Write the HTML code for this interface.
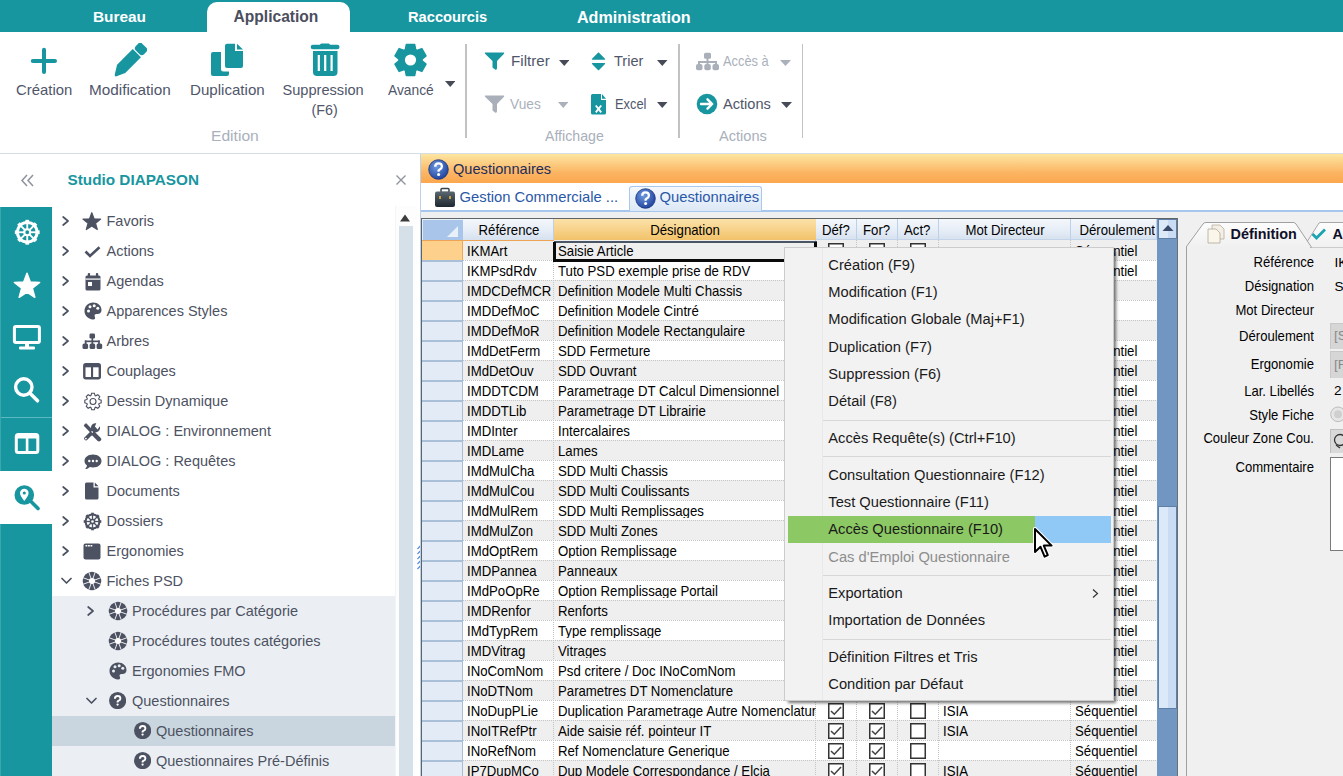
<!DOCTYPE html>
<html><head><meta charset="utf-8"><title>Questionnaires</title>
<style>
html,body{margin:0;padding:0;}
body{width:1343px;height:776px;overflow:hidden;position:relative;background:#fff;font-family:"Liberation Sans",sans-serif;}
.t{position:absolute;white-space:nowrap;}
.b{position:absolute;display:block;}
</style></head><body>
<div class="b" style="left:0px;top:0px;width:1343px;height:32px;background:#1896a0;"></div>
<div class="b" style="left:207px;top:2px;width:143px;height:31px;background:#fff;border-radius:10px 10px 0 0;"></div>
<div class="t" style="left:93px;top:9.46px;font-size:15.4px;line-height:15.4px;color:#fff;font-weight:bold;">Bureau</div>
<div class="t" style="left:233.5px;top:9.29px;font-size:15.6px;line-height:15.6px;color:#4c4e5e;font-weight:bold;">Application</div>
<div class="t" style="left:408px;top:10.05px;font-size:14.7px;line-height:14.7px;color:#fff;font-weight:bold;">Raccourcis</div>
<div class="t" style="left:577px;top:8.87px;font-size:16.1px;line-height:16.1px;color:#fff;font-weight:bold;">Administration</div>
<svg class="b" style="left:29px;top:46px;" width="30" height="30" viewBox="0 0 30 30"><rect x="1.8" y="13" width="26.2" height="4" rx="2" fill="#1896a0"/><rect x="13" y="1.7" width="4" height="26.2" rx="2" fill="#1896a0"/></svg>
<svg class="b" style="left:112.5px;top:43px;" width="34" height="34" viewBox="0 0 34 34"><g transform="translate(17,17) rotate(-45)" fill="#1896a0"><path d="M-12.5,-5.8 L9.7,-5.8 L9.7,5.8 L-12.5,5.8 L-21,2 Q-22.8,1 -21.3,-0.3 Z"/><rect x="10.9" y="-5.8" width="9.3" height="11.6" rx="3.2"/></g></svg>
<svg class="b" style="left:210px;top:43px;" width="34" height="34" viewBox="0 0 34 34"><path d="M1,11 Q1,9 3,9 L11,9 L11,26 Q11,28.5 13.5,28.5 L19,28.5 L19,31 Q19,33 17,33 L3,33 Q1,33 1,31Z" fill="#1896a0"/><path d="M15,2.7 Q15,0.7 17,0.7 L25,0.7 L25,8 L33,8 L33,23 Q33,25 31,25 L17,25 Q15,25 15,23Z" fill="#1896a0"/><path d="M27,0.7 L33,6.5 L27,6.5Z" fill="#1896a0"/></svg>
<svg class="b" style="left:310px;top:43px;" width="31" height="34" viewBox="0 0 31 34"><rect x="0.7" y="1.7" width="28.8" height="4.6" rx="2.3" fill="#1896a0"/><rect x="10" y="0.6" width="10" height="3" rx="1.5" fill="#1896a0"/><path d="M3,8 L27.5,8 L27.5,29 Q27.5,33 23.5,33 L7,33 Q3,33 3,29Z" fill="#1896a0"/><rect x="7.7" y="12" width="2.2" height="16" fill="#fff"/><rect x="14.1" y="12" width="2.2" height="16" fill="#fff"/><rect x="20.5" y="12" width="2.2" height="16" fill="#fff"/></svg>
<svg class="b" style="left:394px;top:43px;" width="34" height="34" viewBox="0 0 34 34"><path d="M11.41,6.69 L12.36,1.55 L20.64,1.55 L21.59,6.69 L22.89,7.44 L27.81,5.69 L31.95,12.86 L27.98,16.25 L27.98,17.75 L31.95,21.14 L27.81,28.31 L22.89,26.56 L21.59,27.31 L20.64,32.45 L12.36,32.45 L11.41,27.31 L10.11,26.56 L5.19,28.31 L1.05,21.14 L5.02,17.75 L5.02,16.25 L1.05,12.86 L5.19,5.69 L10.11,7.44Z" fill="#1896a0" stroke="#1896a0" stroke-width="1.6" stroke-linejoin="round"/><circle cx="16.5" cy="17" r="11.8" fill="#1896a0"/><circle cx="16.5" cy="17" r="5.6" fill="#fff"/></svg>
<svg class="b" style="left:444.5px;top:80.5px;" width="10.5" height="6" viewBox="0 0 10.5 6"><path d="M0,0 L10.5,0 L5.25,6Z" fill="#474b58"/></svg>
<div class="t" style="left:15.5px;top:83.14px;font-size:14.6px;line-height:14.6px;color:#50566a;transform:scaleX(1.02);transform-origin:0 0;">Création</div>
<div class="t" style="left:89px;top:83.14px;font-size:14.6px;line-height:14.6px;color:#50566a;transform:scaleX(1.05);transform-origin:0 0;">Modification</div>
<div class="t" style="left:189.5px;top:83.14px;font-size:14.6px;line-height:14.6px;color:#50566a;transform:scaleX(1.035);transform-origin:0 0;">Duplication</div>
<div class="t" style="left:282.5px;top:83.14px;font-size:14.6px;line-height:14.6px;color:#50566a;">Suppression</div>
<div class="t" style="left:311.5px;top:103.39px;font-size:14.3px;line-height:14.3px;color:#50566a;">(F6)</div>
<div class="t" style="left:387.5px;top:83.14px;font-size:14.6px;line-height:14.6px;color:#50566a;transform:scaleX(0.945);transform-origin:0 0;">Avancé</div>
<div class="t" style="left:211px;top:128.64px;font-size:14.6px;line-height:14.6px;color:#a9b0bb;transform:scaleX(1.07);transform-origin:0 0;">Edition</div>
<div class="b" style="left:465px;top:44px;width:1.5px;height:94px;background:#c2c2c2;"></div>
<div class="b" style="left:678px;top:44px;width:1.5px;height:94px;background:#c2c2c2;"></div>
<div class="b" style="left:801.5px;top:44px;width:1.5px;height:94px;background:#c2c2c2;"></div>
<svg class="b" style="left:484px;top:52px;" width="22" height="19" viewBox="0 0 22 19"><path d="M1.5,0.5 L19.5,0.5 Q20.8,0.5 20,1.8 L13,9 L13,16 Q13,18.5 11,17.5 L8.5,15.5 L8.5,9 L1,1.8 Q0.3,0.5 1.5,0.5Z" fill="#1896a0"/></svg>
<div class="t" style="left:510.5px;top:54.44px;font-size:14.6px;line-height:14.6px;color:#50566a;transform:scaleX(1.04);transform-origin:0 0;">Filtrer</div>
<svg class="b" style="left:558.5px;top:59.5px;" width="10.5" height="6" viewBox="0 0 10.5 6"><path d="M0,0 L10.5,0 L5.25,6Z" fill="#474b58"/></svg>
<svg class="b" style="left:591px;top:52px;" width="15" height="19" viewBox="0 0 15 19"><path d="M7.5,0.3 L14,6.8 Q14.6,7.8 13.4,7.8 L1.6,7.8 Q0.4,7.8 1,6.8Z M7.5,18.5 L14,12 Q14.6,11 13.4,11 L1.6,11 Q0.4,11 1,12Z" fill="#1896a0"/></svg>
<div class="t" style="left:614px;top:54.44px;font-size:14.6px;line-height:14.6px;color:#50566a;">Trier</div>
<svg class="b" style="left:657px;top:59.5px;" width="10.5" height="6" viewBox="0 0 10.5 6"><path d="M0,0 L10.5,0 L5.25,6Z" fill="#474b58"/></svg>
<svg class="b" style="left:484px;top:95px;" width="22" height="19" viewBox="0 0 22 19"><path d="M1.5,0.5 L19.5,0.5 Q20.8,0.5 20,1.8 L13,9 L13,16 Q13,18.5 11,17.5 L8.5,15.5 L8.5,9 L1,1.8 Q0.3,0.5 1.5,0.5Z" fill="#a9b0b9"/></svg>
<div class="t" style="left:510px;top:96.64px;font-size:14.6px;line-height:14.6px;color:#aab1bb;transform:scaleX(0.94);transform-origin:0 0;">Vues</div>
<svg class="b" style="left:557.5px;top:101.5px;" width="10.5" height="6" viewBox="0 0 10.5 6"><path d="M0,0 L10.5,0 L5.25,6Z" fill="#aab1bb"/></svg>
<svg class="b" style="left:591px;top:94px;" width="16" height="21" viewBox="0 0 16 21"><path d="M1.5,0 L10,0 L10,6 L15,6 L15,19 Q15,20.5 13.5,20.5 L1.5,20.5 Q0,20.5 0,19 L0,1.5 Q0,0 1.5,0Z M11,0 L15,4.8 L11,4.8Z" fill="#1896a0"/><path d="M4.8,11.5 L10.2,18.3 M10.2,11.5 L4.8,18.3" stroke="#fff" stroke-width="1.9"/></svg>
<div class="t" style="left:614.5px;top:96.64px;font-size:14.6px;line-height:14.6px;color:#50566a;transform:scaleX(0.88);transform-origin:0 0;">Excel</div>
<svg class="b" style="left:657px;top:101.5px;" width="10.5" height="6" viewBox="0 0 10.5 6"><path d="M0,0 L10.5,0 L5.25,6Z" fill="#474b58"/></svg>
<div class="t" style="left:544.5px;top:128.64px;font-size:14.6px;line-height:14.6px;color:#a9b0bb;transform:scaleX(0.97);transform-origin:0 0;">Affichage</div>
<svg class="b" style="left:695px;top:52px;" width="25" height="19" viewBox="0 0 25 19"><rect x="9" y="0.8" width="7" height="6" rx="1.5" fill="#a9b0b9"/><rect x="11.5" y="6" width="2" height="4" fill="#a9b0b9"/><rect x="3" y="9" width="19" height="2" fill="#a9b0b9"/><rect x="3" y="9" width="2" height="4" fill="#a9b0b9"/><rect x="20" y="9" width="2" height="4" fill="#a9b0b9"/><rect x="11.5" y="9" width="2" height="4" fill="#a9b0b9"/><rect x="1" y="12" width="6.5" height="6.3" rx="2" fill="#a9b0b9"/><rect x="9.3" y="12" width="6.5" height="6.3" rx="2" fill="#a9b0b9"/><rect x="17.5" y="12" width="6.5" height="6.3" rx="2" fill="#a9b0b9"/></svg>
<div class="t" style="left:723px;top:54.44px;font-size:14.6px;line-height:14.6px;color:#aab1bb;transform:scaleX(0.88);transform-origin:0 0;">Accès à</div>
<svg class="b" style="left:780px;top:59.5px;" width="11" height="6" viewBox="0 0 11 6"><path d="M0,0 L11,0 L5.5,6Z" fill="#aab1bb"/></svg>
<svg class="b" style="left:696px;top:93px;" width="22" height="22" viewBox="0 0 22 22"><circle cx="11" cy="11" r="10.3" fill="#1896a0"/><path d="M5,11 L16,11 M11.5,6.3 L16.2,11 L11.5,15.7" stroke="#fff" stroke-width="2.4" fill="none" stroke-linecap="round" stroke-linejoin="round"/></svg>
<div class="t" style="left:723px;top:96.64px;font-size:14.6px;line-height:14.6px;color:#50566a;">Actions</div>
<svg class="b" style="left:780.5px;top:101.5px;" width="11" height="6" viewBox="0 0 11 6"><path d="M0,0 L11,0 L5.5,6Z" fill="#474b58"/></svg>
<div class="t" style="left:719px;top:128.64px;font-size:14.6px;line-height:14.6px;color:#a9b0bb;">Actions</div>
<div class="b" style="left:0px;top:153px;width:1343px;height:1px;background:#d5dee5;"></div>
<svg class="b" style="left:20px;top:174px;" width="15" height="13" viewBox="0 0 15 13"><path d="M7,1 L2,6.5 L7,12 M13,1 L8,6.5 L13,12" stroke="#8d929c" stroke-width="1.5" fill="none"/></svg>
<div class="t" style="left:67.5px;top:172.35px;font-size:15.3px;line-height:15.3px;color:#1896a0;font-weight:bold;">Studio DIAPASON</div>
<svg class="b" style="left:395px;top:174px;" width="12" height="12" viewBox="0 0 12 12"><path d="M1.5,1.5 L10.5,10.5 M10.5,1.5 L1.5,10.5" stroke="#8f949c" stroke-width="1.4"/></svg>
<div class="b" style="left:0px;top:207px;width:52px;height:264px;background:#1896a0;"></div>
<div class="b" style="left:0px;top:417px;width:52px;height:1px;background:#5cb8c0;"></div>
<div class="b" style="left:0px;top:524px;width:52px;height:252px;background:#1896a0;"></div>
<div class="b" style="left:0px;top:207px;width:1px;height:264px;background:#3aa6ae;"></div>
<div class="b" style="left:0px;top:524px;width:1px;height:252px;background:#3aa6ae;"></div>
<svg class="b" style="left:14px;top:219px;" width="27" height="27" viewBox="0 0 27 27"><circle cx="13.25" cy="13.25" r="9.80" fill="none" stroke="#fff" stroke-width="2.98"/><circle cx="13.25" cy="13.25" r="2.98" fill="none" stroke="#fff" stroke-width="2.11"/><line x1="16.35" y1="13.25" x2="23.17" y2="13.25" stroke="#fff" stroke-width="1.86"/><line x1="23.17" y1="13.25" x2="25.65" y2="13.25" stroke="#fff" stroke-width="3.72"/><line x1="15.44" y1="15.44" x2="20.26" y2="20.26" stroke="#fff" stroke-width="1.86"/><line x1="20.26" y1="20.26" x2="22.02" y2="22.02" stroke="#fff" stroke-width="3.72"/><line x1="13.25" y1="16.35" x2="13.25" y2="23.17" stroke="#fff" stroke-width="1.86"/><line x1="13.25" y1="23.17" x2="13.25" y2="25.65" stroke="#fff" stroke-width="3.72"/><line x1="11.06" y1="15.44" x2="6.24" y2="20.26" stroke="#fff" stroke-width="1.86"/><line x1="6.24" y1="20.26" x2="4.48" y2="22.02" stroke="#fff" stroke-width="3.72"/><line x1="10.15" y1="13.25" x2="3.33" y2="13.25" stroke="#fff" stroke-width="1.86"/><line x1="3.33" y1="13.25" x2="0.85" y2="13.25" stroke="#fff" stroke-width="3.72"/><line x1="11.06" y1="11.06" x2="6.24" y2="6.24" stroke="#fff" stroke-width="1.86"/><line x1="6.24" y1="6.24" x2="4.48" y2="4.48" stroke="#fff" stroke-width="3.72"/><line x1="13.25" y1="10.15" x2="13.25" y2="3.33" stroke="#fff" stroke-width="1.86"/><line x1="13.25" y1="3.33" x2="13.25" y2="0.85" stroke="#fff" stroke-width="3.72"/><line x1="15.44" y1="11.06" x2="20.26" y2="6.24" stroke="#fff" stroke-width="1.86"/><line x1="20.26" y1="6.24" x2="22.02" y2="4.48" stroke="#fff" stroke-width="3.72"/></svg>
<svg class="b" style="left:13px;top:271px;" width="28" height="28" viewBox="0 0 28 28"><polygon points="14.00,2.20 17.29,10.97 26.65,11.39 19.33,17.23 21.82,26.26 14.00,21.10 6.18,26.26 8.67,17.23 1.35,11.39 10.71,10.97" fill="#fff" stroke="#fff" stroke-width="1.5" stroke-linejoin="round"/></svg>
<svg class="b" style="left:12px;top:324px;" width="30" height="27" viewBox="0 0 30 27"><rect x="2.4" y="2.4" width="25" height="16" rx="1.5" fill="none" stroke="#fff" stroke-width="3"/><rect x="13" y="19" width="4" height="5" fill="#fff"/><rect x="7" y="22.5" width="16" height="3" rx="1" fill="#fff"/></svg>
<svg class="b" style="left:13px;top:376px;" width="28" height="28" viewBox="0 0 28 28"><circle cx="10.8" cy="11" r="8.2" fill="none" stroke="#fff" stroke-width="3.4"/><path d="M17,17.3 L24.5,24.8" stroke="#fff" stroke-width="3.6" stroke-linecap="round"/></svg>
<svg class="b" style="left:14px;top:432px;" width="27" height="24" viewBox="0 0 27 24"><rect x="2.3" y="2.5" width="21.5" height="18" rx="2" fill="none" stroke="#fff" stroke-width="3"/><rect x="2.3" y="2.5" width="21.5" height="4" fill="#fff"/><rect x="11.8" y="2.5" width="2.6" height="18" fill="#fff"/></svg>
<svg class="b" style="left:13px;top:484px;" width="28" height="27" viewBox="0 0 28 27"><circle cx="11.3" cy="11" r="9.8" fill="#1896a0"/><path d="M11.3,17 C9,13.5 7,11.5 7,9 C7,6.5 9,4.8 11.3,4.8 C13.6,4.8 15.6,6.5 15.6,9 C15.6,11.5 13.6,13.5 11.3,17Z" fill="#fff"/><circle cx="11.3" cy="9" r="1.6" fill="#1896a0"/><path d="M18.5,18 L25,24.5" stroke="#1896a0" stroke-width="3.6" stroke-linecap="round"/></svg>
<div class="b" style="left:52px;top:596px;width:343px;height:180px;background:#ebeff3;"></div>
<div class="b" style="left:52px;top:716px;width:343px;height:30px;background:#c9d6df;"></div>
<svg class="b" style="left:61.5px;top:216px;" width="8" height="10" viewBox="0 0 8 10"><path d="M1.2,1 L6,5 L1.2,9" stroke="#4d5262" stroke-width="1.7" fill="none" stroke-linecap="round" stroke-linejoin="round"/></svg>
<svg class="b" style="left:82.0px;top:212px;" width="20" height="19" viewBox="0 0 20 19"><polygon points="9.80,0.70 12.09,6.84 18.64,7.13 13.51,11.21 15.27,17.52 9.80,13.90 4.33,17.52 6.09,11.21 0.96,7.13 7.51,6.84" fill="#4d5262" stroke="#4d5262" stroke-width="1.2" stroke-linejoin="round"/></svg>
<div class="t" style="left:106.5px;top:214.02px;font-size:14.5px;line-height:14.5px;color:#4d5262;">Favoris</div>
<svg class="b" style="left:61.5px;top:246px;" width="8" height="10" viewBox="0 0 8 10"><path d="M1.2,1 L6,5 L1.2,9" stroke="#4d5262" stroke-width="1.7" fill="none" stroke-linecap="round" stroke-linejoin="round"/></svg>
<svg class="b" style="left:84.0px;top:246px;" width="17" height="12" viewBox="0 0 17 12"><path d="M1.5,5.5 L6,10 L15.5,1.2" stroke="#4d5262" stroke-width="2.6" fill="none"/></svg>
<div class="t" style="left:106.5px;top:244.02px;font-size:14.5px;line-height:14.5px;color:#4d5262;">Actions</div>
<svg class="b" style="left:61.5px;top:276px;" width="8" height="10" viewBox="0 0 8 10"><path d="M1.2,1 L6,5 L1.2,9" stroke="#4d5262" stroke-width="1.7" fill="none" stroke-linecap="round" stroke-linejoin="round"/></svg>
<svg class="b" style="left:84.5px;top:272.5px;" width="16" height="18" viewBox="0 0 16 18"><rect x="0.5" y="2.5" width="15" height="15" rx="1.6" fill="#4d5262"/><rect x="2.8" y="0" width="2.3" height="4" rx="0.8" fill="#4d5262"/><rect x="10.9" y="0" width="2.3" height="4" rx="0.8" fill="#4d5262"/><rect x="0.5" y="5.5" width="15" height="1.2" fill="#fff"/><rect x="3" y="9" width="4" height="4" fill="#fff"/></svg>
<div class="t" style="left:106.5px;top:274.02px;font-size:14.5px;line-height:14.5px;color:#4d5262;">Agendas</div>
<svg class="b" style="left:61.5px;top:306px;" width="8" height="10" viewBox="0 0 8 10"><path d="M1.2,1 L6,5 L1.2,9" stroke="#4d5262" stroke-width="1.7" fill="none" stroke-linecap="round" stroke-linejoin="round"/></svg>
<svg class="b" style="left:83.5px;top:302px;" width="18" height="18" viewBox="0 0 18 18"><path d="M9,0.5 C14,0.5 17.5,3.8 17.5,8 C17.5,11 15.5,12.2 13,12 C11,11.8 10,13 10.8,14.8 C11.8,17 10.5,17.8 8.8,17.5 C4,17 0.5,13.5 0.5,9 C0.5,4.2 4.2,0.5 9,0.5Z" fill="#4d5262"/><circle cx="4.5" cy="9" r="1.5" fill="#fff"/><circle cx="6" cy="4.8" r="1.5" fill="#fff"/><circle cx="10.2" cy="3.8" r="1.5" fill="#fff"/><circle cx="13.8" cy="6.2" r="1.5" fill="#fff"/></svg>
<div class="t" style="left:106.5px;top:304.02px;font-size:14.5px;line-height:14.5px;color:#4d5262;">Apparences Styles</div>
<svg class="b" style="left:61.5px;top:336px;" width="8" height="10" viewBox="0 0 8 10"><path d="M1.2,1 L6,5 L1.2,9" stroke="#4d5262" stroke-width="1.7" fill="none" stroke-linecap="round" stroke-linejoin="round"/></svg>
<svg class="b" style="left:81.5px;top:333px;" width="21" height="17" viewBox="0 0 21 17"><rect x="7.5" y="0.5" width="5.5" height="5" rx="1.2" fill="#4d5262"/><rect x="9.5" y="5" width="1.7" height="3.5" fill="#4d5262"/><rect x="2.8" y="7.5" width="15" height="1.7" fill="#4d5262"/><rect x="2.8" y="7.5" width="1.7" height="3.5" fill="#4d5262"/><rect x="16.1" y="7.5" width="1.7" height="3.5" fill="#4d5262"/><rect x="9.5" y="7.5" width="1.7" height="3.5" fill="#4d5262"/><rect x="0.5" y="10.5" width="5.6" height="5.5" rx="1.6" fill="#4d5262"/><rect x="7.6" y="10.5" width="5.6" height="5.5" rx="1.6" fill="#4d5262"/><rect x="14.6" y="10.5" width="5.6" height="5.5" rx="1.6" fill="#4d5262"/></svg>
<div class="t" style="left:106.5px;top:334.02px;font-size:14.5px;line-height:14.5px;color:#4d5262;">Arbres</div>
<svg class="b" style="left:61.5px;top:366px;" width="8" height="10" viewBox="0 0 8 10"><path d="M1.2,1 L6,5 L1.2,9" stroke="#4d5262" stroke-width="1.7" fill="none" stroke-linecap="round" stroke-linejoin="round"/></svg>
<svg class="b" style="left:83.0px;top:363px;" width="18" height="17" viewBox="0 0 18 17"><rect x="1.3" y="1.3" width="15.5" height="14" rx="1.5" fill="none" stroke="#4d5262" stroke-width="2.4"/><rect x="1.3" y="1.3" width="15.5" height="3" fill="#4d5262"/><rect x="8" y="1.3" width="2.1" height="14" fill="#4d5262"/></svg>
<div class="t" style="left:106.5px;top:364.02px;font-size:14.5px;line-height:14.5px;color:#4d5262;">Couplages</div>
<svg class="b" style="left:61.5px;top:396px;" width="8" height="10" viewBox="0 0 8 10"><path d="M1.2,1 L6,5 L1.2,9" stroke="#4d5262" stroke-width="1.7" fill="none" stroke-linecap="round" stroke-linejoin="round"/></svg>
<svg class="b" style="left:83.5px;top:391.5px;" width="18" height="19" viewBox="0 0 18 19"><path d="M14.95,7.42 L17.19,8.14 L17.19,10.86 L14.95,11.58 L14.67,12.24 L15.75,14.33 L13.83,16.25 L11.74,15.17 L11.08,15.45 L10.36,17.69 L7.64,17.69 L6.92,15.45 L6.26,15.17 L4.17,16.25 L2.25,14.33 L3.33,12.24 L3.05,11.58 L0.81,10.86 L0.81,8.14 L3.05,7.42 L3.33,6.76 L2.25,4.67 L4.17,2.75 L6.26,3.83 L6.92,3.55 L7.64,1.31 L10.36,1.31 L11.08,3.55 L11.74,3.83 L13.83,2.75 L15.75,4.67 L14.67,6.76Z" fill="none" stroke="#4d5262" stroke-width="1.1"/><circle cx="9" cy="9.5" r="3" fill="none" stroke="#4d5262" stroke-width="1.1"/></svg>
<div class="t" style="left:106.5px;top:394.02px;font-size:14.5px;line-height:14.5px;color:#4d5262;">Dessin Dynamique</div>
<svg class="b" style="left:61.5px;top:426px;" width="8" height="10" viewBox="0 0 8 10"><path d="M1.2,1 L6,5 L1.2,9" stroke="#4d5262" stroke-width="1.7" fill="none" stroke-linecap="round" stroke-linejoin="round"/></svg>
<svg class="b" style="left:82.0px;top:421.5px;" width="21" height="20" viewBox="0 0 21 20"><path d="M4,2 L2.5,3.5 L8.5,9.8 L10,8.3Z" fill="#4d5262" stroke="#4d5262" stroke-width="1.4" stroke-linejoin="round"/><path d="M11.3,11.5 L17,17.2" stroke="#4d5262" stroke-width="4.4" stroke-linecap="round"/><path d="M4,16.5 L10.5,10" stroke="#4d5262" stroke-width="3.8" stroke-linecap="round"/><circle cx="3.9" cy="16.6" r="0.9" fill="#fff"/><path d="M10,10.5 L13,7.5" stroke="#fff" stroke-width="1.2"/><path d="M17.8,4.2 A4.6,4.6 0 1 1 14.3,1.3 L12.9,4.6 L15.6,7.4 Z" fill="#4d5262"/><path d="M8.5,12.5 L13,8" stroke="#4d5262" stroke-width="3" stroke-linecap="round"/><path d="M9.6,9.3 L10.8,10.5" stroke="#fff" stroke-width="1.1"/></svg>
<div class="t" style="left:106.5px;top:424.02px;font-size:14.5px;line-height:14.5px;color:#4d5262;">DIALOG : Environnement</div>
<svg class="b" style="left:61.5px;top:456px;" width="8" height="10" viewBox="0 0 8 10"><path d="M1.2,1 L6,5 L1.2,9" stroke="#4d5262" stroke-width="1.7" fill="none" stroke-linecap="round" stroke-linejoin="round"/></svg>
<svg class="b" style="left:83.5px;top:453.5px;" width="18" height="16" viewBox="0 0 18 16"><path d="M9,0.5 C14,0.5 17.5,3.4 17.5,7 C17.5,10.6 14,13.5 9,13.5 C7.8,13.5 6.8,13.3 5.8,13 C4.5,14.3 2.8,15.2 1,15 C2.2,13.8 2.8,12.8 3,11.5 C1.4,10.3 0.5,8.8 0.5,7 C0.5,3.4 4,0.5 9,0.5Z" fill="#4d5262"/><circle cx="5.3" cy="7" r="1.2" fill="#fff"/><circle cx="9" cy="7" r="1.2" fill="#fff"/><circle cx="12.7" cy="7" r="1.2" fill="#fff"/></svg>
<div class="t" style="left:106.5px;top:454.02px;font-size:14.5px;line-height:14.5px;color:#4d5262;">DIALOG : Requêtes</div>
<svg class="b" style="left:61.5px;top:486px;" width="8" height="10" viewBox="0 0 8 10"><path d="M1.2,1 L6,5 L1.2,9" stroke="#4d5262" stroke-width="1.7" fill="none" stroke-linecap="round" stroke-linejoin="round"/></svg>
<svg class="b" style="left:84.5px;top:482px;" width="15" height="18" viewBox="0 0 15 18"><path d="M1.5,0.5 L8.5,0.5 L8.5,5.5 L13.5,5.5 L13.5,16 Q13.5,17.5 12,17.5 L1.5,17.5 Q0,17.5 0,16 L0,2 Q0,0.5 1.5,0.5Z M9.8,0.5 L13.5,4.2 L9.8,4.2Z" fill="#4d5262"/></svg>
<div class="t" style="left:106.5px;top:484.02px;font-size:14.5px;line-height:14.5px;color:#4d5262;">Documents</div>
<svg class="b" style="left:61.5px;top:516px;" width="8" height="10" viewBox="0 0 8 10"><path d="M1.2,1 L6,5 L1.2,9" stroke="#4d5262" stroke-width="1.7" fill="none" stroke-linecap="round" stroke-linejoin="round"/></svg>
<svg class="b" style="left:83.0px;top:511.5px;" width="19" height="19" viewBox="0 0 19 19"><circle cx="9.5" cy="9.5" r="6.95" fill="none" stroke="#4d5262" stroke-width="2.11"/><circle cx="9.5" cy="9.5" r="2.11" fill="none" stroke="#4d5262" stroke-width="1.50"/><line x1="11.70" y1="9.50" x2="16.54" y2="9.50" stroke="#4d5262" stroke-width="1.32"/><line x1="16.54" y1="9.50" x2="18.30" y2="9.50" stroke="#4d5262" stroke-width="2.64"/><line x1="11.06" y1="11.06" x2="14.48" y2="14.48" stroke="#4d5262" stroke-width="1.32"/><line x1="14.48" y1="14.48" x2="15.72" y2="15.72" stroke="#4d5262" stroke-width="2.64"/><line x1="9.50" y1="11.70" x2="9.50" y2="16.54" stroke="#4d5262" stroke-width="1.32"/><line x1="9.50" y1="16.54" x2="9.50" y2="18.30" stroke="#4d5262" stroke-width="2.64"/><line x1="7.94" y1="11.06" x2="4.52" y2="14.48" stroke="#4d5262" stroke-width="1.32"/><line x1="4.52" y1="14.48" x2="3.28" y2="15.72" stroke="#4d5262" stroke-width="2.64"/><line x1="7.30" y1="9.50" x2="2.46" y2="9.50" stroke="#4d5262" stroke-width="1.32"/><line x1="2.46" y1="9.50" x2="0.70" y2="9.50" stroke="#4d5262" stroke-width="2.64"/><line x1="7.94" y1="7.94" x2="4.52" y2="4.52" stroke="#4d5262" stroke-width="1.32"/><line x1="4.52" y1="4.52" x2="3.28" y2="3.28" stroke="#4d5262" stroke-width="2.64"/><line x1="9.50" y1="7.30" x2="9.50" y2="2.46" stroke="#4d5262" stroke-width="1.32"/><line x1="9.50" y1="2.46" x2="9.50" y2="0.70" stroke="#4d5262" stroke-width="2.64"/><line x1="11.06" y1="7.94" x2="14.48" y2="4.52" stroke="#4d5262" stroke-width="1.32"/><line x1="14.48" y1="4.52" x2="15.72" y2="3.28" stroke="#4d5262" stroke-width="2.64"/></svg>
<div class="t" style="left:106.5px;top:514.02px;font-size:14.5px;line-height:14.5px;color:#4d5262;">Dossiers</div>
<svg class="b" style="left:61.5px;top:546px;" width="8" height="10" viewBox="0 0 8 10"><path d="M1.2,1 L6,5 L1.2,9" stroke="#4d5262" stroke-width="1.7" fill="none" stroke-linecap="round" stroke-linejoin="round"/></svg>
<svg class="b" style="left:83.0px;top:543px;" width="18" height="17" viewBox="0 0 18 17"><rect x="0.5" y="0.5" width="17" height="16" rx="2" fill="#4d5262"/><rect x="2.5" y="2" width="1.8" height="1.5" fill="#fff"/><rect x="5" y="2" width="1.8" height="1.5" fill="#fff"/><rect x="7.5" y="2" width="1.8" height="1.5" fill="#fff"/></svg>
<div class="t" style="left:106.5px;top:544.02px;font-size:14.5px;line-height:14.5px;color:#4d5262;">Ergonomies</div>
<svg class="b" style="left:60.5px;top:577px;" width="11" height="8" viewBox="0 0 11 8"><path d="M1,1.5 L5.5,6 L10,1.5" stroke="#4d5262" stroke-width="1.7" fill="none" stroke-linecap="round" stroke-linejoin="round"/></svg>
<svg class="b" style="left:82.0px;top:571px;" width="20" height="20" viewBox="0 0 20 20"><circle cx="10" cy="10" r="9.3" fill="#4d5262"/><line x1="10" y1="10" x2="19.18" y2="13.34" stroke="#fff" stroke-width="0.9"/><line x1="10" y1="10" x2="13.34" y2="19.18" stroke="#fff" stroke-width="0.9"/><line x1="10" y1="10" x2="6.66" y2="19.18" stroke="#fff" stroke-width="0.9"/><line x1="10" y1="10" x2="0.82" y2="13.34" stroke="#fff" stroke-width="0.9"/><line x1="10" y1="10" x2="0.82" y2="6.66" stroke="#fff" stroke-width="0.9"/><line x1="10" y1="10" x2="6.66" y2="0.82" stroke="#fff" stroke-width="0.9"/><line x1="10" y1="10" x2="13.34" y2="0.82" stroke="#fff" stroke-width="0.9"/><line x1="10" y1="10" x2="19.18" y2="6.66" stroke="#fff" stroke-width="0.9"/><circle cx="10" cy="10" r="3.07" fill="#fff"/></svg>
<div class="t" style="left:106.5px;top:574.02px;font-size:14.5px;line-height:14.5px;color:#4d5262;">Fiches PSD</div>
<svg class="b" style="left:87.0px;top:606px;" width="8" height="10" viewBox="0 0 8 10"><path d="M1.2,1 L6,5 L1.2,9" stroke="#4d5262" stroke-width="1.7" fill="none" stroke-linecap="round" stroke-linejoin="round"/></svg>
<svg class="b" style="left:107.5px;top:601px;" width="20" height="20" viewBox="0 0 20 20"><circle cx="10" cy="10" r="9.3" fill="#4d5262"/><line x1="10" y1="10" x2="19.18" y2="13.34" stroke="#fff" stroke-width="0.9"/><line x1="10" y1="10" x2="13.34" y2="19.18" stroke="#fff" stroke-width="0.9"/><line x1="10" y1="10" x2="6.66" y2="19.18" stroke="#fff" stroke-width="0.9"/><line x1="10" y1="10" x2="0.82" y2="13.34" stroke="#fff" stroke-width="0.9"/><line x1="10" y1="10" x2="0.82" y2="6.66" stroke="#fff" stroke-width="0.9"/><line x1="10" y1="10" x2="6.66" y2="0.82" stroke="#fff" stroke-width="0.9"/><line x1="10" y1="10" x2="13.34" y2="0.82" stroke="#fff" stroke-width="0.9"/><line x1="10" y1="10" x2="19.18" y2="6.66" stroke="#fff" stroke-width="0.9"/><circle cx="10" cy="10" r="3.07" fill="#fff"/></svg>
<div class="t" style="left:132.0px;top:604.02px;font-size:14.5px;line-height:14.5px;color:#4d5262;">Procédures par Catégorie</div>
<svg class="b" style="left:107.5px;top:631px;" width="20" height="20" viewBox="0 0 20 20"><circle cx="10" cy="10" r="9.3" fill="#4d5262"/><line x1="10" y1="10" x2="19.18" y2="13.34" stroke="#fff" stroke-width="0.9"/><line x1="10" y1="10" x2="13.34" y2="19.18" stroke="#fff" stroke-width="0.9"/><line x1="10" y1="10" x2="6.66" y2="19.18" stroke="#fff" stroke-width="0.9"/><line x1="10" y1="10" x2="0.82" y2="13.34" stroke="#fff" stroke-width="0.9"/><line x1="10" y1="10" x2="0.82" y2="6.66" stroke="#fff" stroke-width="0.9"/><line x1="10" y1="10" x2="6.66" y2="0.82" stroke="#fff" stroke-width="0.9"/><line x1="10" y1="10" x2="13.34" y2="0.82" stroke="#fff" stroke-width="0.9"/><line x1="10" y1="10" x2="19.18" y2="6.66" stroke="#fff" stroke-width="0.9"/><circle cx="10" cy="10" r="3.07" fill="#fff"/></svg>
<div class="t" style="left:132.0px;top:634.02px;font-size:14.5px;line-height:14.5px;color:#4d5262;">Procédures toutes catégories</div>
<svg class="b" style="left:109.0px;top:662px;" width="18" height="18" viewBox="0 0 18 18"><path d="M9,0.5 C14,0.5 17.5,3.8 17.5,8 C17.5,11 15.5,12.2 13,12 C11,11.8 10,13 10.8,14.8 C11.8,17 10.5,17.8 8.8,17.5 C4,17 0.5,13.5 0.5,9 C0.5,4.2 4.2,0.5 9,0.5Z" fill="#4d5262"/><circle cx="4.5" cy="9" r="1.5" fill="#ebeff3"/><circle cx="6" cy="4.8" r="1.5" fill="#ebeff3"/><circle cx="10.2" cy="3.8" r="1.5" fill="#ebeff3"/><circle cx="13.8" cy="6.2" r="1.5" fill="#ebeff3"/></svg>
<div class="t" style="left:132.0px;top:664.02px;font-size:14.5px;line-height:14.5px;color:#4d5262;">Ergonomies FMO</div>
<svg class="b" style="left:86.0px;top:697px;" width="11" height="8" viewBox="0 0 11 8"><path d="M1,1.5 L5.5,6 L10,1.5" stroke="#4d5262" stroke-width="1.7" fill="none" stroke-linecap="round" stroke-linejoin="round"/></svg>
<svg class="b" style="left:108.8px;top:692.3px;" width="17.2" height="17.2" viewBox="0 0 17.2 17.2"><circle cx="8.6" cy="8.6" r="8.6" fill="#4d5262"/><path d="M5.90,6.70 Q5.90,4.00 8.60,4.00 Q11.40,4.00 11.40,6.40 Q11.40,8.00 9.30,8.90 L8.60,9.70 L8.60,10.50" stroke="#fff" stroke-width="1.9" fill="none"/><circle cx="8.6" cy="12.6" r="1.15" fill="#fff"/></svg>
<div class="t" style="left:132.0px;top:694.02px;font-size:14.5px;line-height:14.5px;color:#4d5262;">Questionnaires</div>
<svg class="b" style="left:134.3px;top:722.3px;" width="17.2" height="17.2" viewBox="0 0 17.2 17.2"><circle cx="8.6" cy="8.6" r="8.6" fill="#4d5262"/><path d="M5.90,6.70 Q5.90,4.00 8.60,4.00 Q11.40,4.00 11.40,6.40 Q11.40,8.00 9.30,8.90 L8.60,9.70 L8.60,10.50" stroke="#fff" stroke-width="1.9" fill="none"/><circle cx="8.6" cy="12.6" r="1.15" fill="#fff"/></svg>
<div class="t" style="left:156.0px;top:724.02px;font-size:14.5px;line-height:14.5px;color:#4d5262;">Questionnaires</div>
<svg class="b" style="left:134.3px;top:752.3px;" width="17.2" height="17.2" viewBox="0 0 17.2 17.2"><circle cx="8.6" cy="8.6" r="8.6" fill="#4d5262"/><path d="M5.90,6.70 Q5.90,4.00 8.60,4.00 Q11.40,4.00 11.40,6.40 Q11.40,8.00 9.30,8.90 L8.60,9.70 L8.60,10.50" stroke="#fff" stroke-width="1.9" fill="none"/><circle cx="8.6" cy="12.6" r="1.15" fill="#fff"/></svg>
<div class="t" style="left:156.0px;top:754.02px;font-size:14.5px;line-height:14.5px;color:#4d5262;">Questionnaires Pré-Définis</div>
<div class="b" style="left:395px;top:206px;width:21px;height:570px;background:#fdfdfe;border-left:1px solid #f2f4f6;"></div>
<svg class="b" style="left:400px;top:214px;" width="10" height="8" viewBox="0 0 10 8"><path d="M0,7.5 L5,0.5 L10,7.5Z" fill="#3c3c3c"/></svg>
<div class="b" style="left:398.5px;top:226px;width:14px;height:550px;background:#d6e0e9;"></div>
<svg class="b" style="left:416.5px;top:545px;" width="5" height="26" viewBox="0 0 5 26"><path d="M0.8,3.6 L3.6,0.8" stroke="#4f86e0" stroke-width="1.3" stroke-linecap="round"/><path d="M0.8,8.6 L3.6,5.8" stroke="#4f86e0" stroke-width="1.3" stroke-linecap="round"/><path d="M0.8,13.6 L3.6,10.8" stroke="#4f86e0" stroke-width="1.3" stroke-linecap="round"/><path d="M0.8,18.6 L3.6,15.8" stroke="#4f86e0" stroke-width="1.3" stroke-linecap="round"/><path d="M0.8,23.6 L3.6,20.8" stroke="#4f86e0" stroke-width="1.3" stroke-linecap="round"/></svg>
<div class="b" style="left:420px;top:154px;width:1px;height:622px;background:#bcd2ea;"></div>
<div class="b" style="left:421px;top:154px;width:922px;height:29px;background:linear-gradient(#fde6a0 0%,#fccb80 35%,#fbb462 65%,#fca74e 100%);"></div>
<svg class="b" style="left:428px;top:159px;" width="21" height="21" viewBox="0 0 21 21"><defs><radialGradient id="qg" cx="40%" cy="35%" r="70%"><stop offset="0" stop-color="#6f9ae0"/><stop offset="1" stop-color="#1d3f9a"/></radialGradient></defs><circle cx="10.5" cy="10.5" r="9.8" fill="url(#qg)" stroke="#1b3580" stroke-width="0.8"/><path d="M7.2,7.8 Q7.2,4.4 10.5,4.4 Q13.9,4.4 13.9,7.6 Q13.9,9.6 11.4,10.8 L10.6,11.5 L10.6,12.8" stroke="#fff" stroke-width="2.3" fill="none"/><circle cx="10.6" cy="15.6" r="1.5" fill="#fff"/></svg>
<div class="t" style="left:453px;top:161.64px;font-size:14.6px;line-height:14.6px;color:#1e2d5a;">Questionnaires</div>
<div class="b" style="left:421px;top:183px;width:922px;height:27px;background:#fff;"></div>
<div class="b" style="left:421px;top:210px;width:922px;height:1.5px;background:#a6c6ee;"></div>
<div class="b" style="left:421px;top:211.5px;width:922px;height:6.5px;background:#efefef;"></div>
<svg class="b" style="left:434px;top:187px;" width="22" height="21" viewBox="0 0 22 21"><defs><linearGradient id="bc" x1="0" y1="0" x2="0" y2="1"><stop offset="0" stop-color="#5a6670"/><stop offset="1" stop-color="#1e2830"/></linearGradient></defs><rect x="7" y="1.5" width="8" height="4" rx="1" fill="none" stroke="#3a444c" stroke-width="1.5"/><rect x="1" y="4.5" width="20" height="15.5" rx="2" fill="url(#bc)"/><rect x="5" y="9" width="2" height="3" fill="#c8a040"/><rect x="15" y="9" width="2" height="3" fill="#c8a040"/></svg>
<div class="t" style="left:459.5px;top:189.97px;font-size:14.8px;line-height:14.8px;color:#2a58a8;">Gestion Commerciale ...</div>
<div class="b" style="left:629px;top:186px;width:133px;height:25px;background:linear-gradient(#f5f9fd,#dce8f6);border:1px solid #a9c8ec;border-bottom:none;border-radius:3px 3px 0 0;box-sizing:border-box;"></div>
<svg class="b" style="left:635px;top:188px;" width="21" height="21" viewBox="0 0 21 21"><circle cx="10.5" cy="10.5" r="9.8" fill="url(#qg)" stroke="#1b3580" stroke-width="0.8"/><path d="M7.2,7.8 Q7.2,4.4 10.5,4.4 Q13.9,4.4 13.9,7.6 Q13.9,9.6 11.4,10.8 L10.6,11.5 L10.6,12.8" stroke="#fff" stroke-width="2.3" fill="none"/><circle cx="10.6" cy="15.6" r="1.5" fill="#fff"/></svg>
<div class="t" style="left:659.5px;top:189.97px;font-size:14.8px;line-height:14.8px;color:#2a58a8;">Questionnaires</div>
<div class="b" style="left:421px;top:218px;width:757px;height:558px;background:#fff;"></div>
<div class="b" style="left:421px;top:218px;width:757px;height:1px;background:#5f6468;"></div>
<div class="b" style="left:421px;top:218px;width:1px;height:558px;background:#5f6468;"></div>
<div class="b" style="left:422px;top:219px;width:41px;height:21px;background:#a9c5ea;border-top:1px solid #e8f0fa;border-left:1px solid #e0eaf8;box-sizing:border-box;"></div>
<svg class="b" style="left:446px;top:225px;" width="13" height="13" viewBox="0 0 13 13"><path d="M12,1 L12,12 L1,12Z" fill="#e8f0fa"/></svg>
<div class="b" style="left:463px;top:219px;width:91px;height:21px;background:linear-gradient(#f4f7fb 0%,#e7eef7 50%,#d6e1ef 100%);"></div>
<div class="b" style="left:553px;top:219px;width:1px;height:21px;background:#bcd0e8;"></div>
<div class="b" style="left:554px;top:219px;width:262px;height:21px;background:linear-gradient(#fbe2a8 0%,#f7d28a 50%,#f2c26a 100%);"></div>
<div class="b" style="left:816px;top:219px;width:41px;height:21px;background:linear-gradient(#f4f7fb 0%,#e7eef7 50%,#d6e1ef 100%);"></div>
<div class="b" style="left:856px;top:219px;width:1px;height:21px;background:#bcd0e8;"></div>
<div class="b" style="left:857px;top:219px;width:41px;height:21px;background:linear-gradient(#f4f7fb 0%,#e7eef7 50%,#d6e1ef 100%);"></div>
<div class="b" style="left:897px;top:219px;width:1px;height:21px;background:#bcd0e8;"></div>
<div class="b" style="left:898px;top:219px;width:41px;height:21px;background:linear-gradient(#f4f7fb 0%,#e7eef7 50%,#d6e1ef 100%);"></div>
<div class="b" style="left:938px;top:219px;width:1px;height:21px;background:#bcd0e8;"></div>
<div class="b" style="left:939px;top:219px;width:132px;height:21px;background:linear-gradient(#f4f7fb 0%,#e7eef7 50%,#d6e1ef 100%);"></div>
<div class="b" style="left:1070px;top:219px;width:1px;height:21px;background:#bcd0e8;"></div>
<div class="b" style="left:1071px;top:219px;width:86px;height:21px;background:linear-gradient(#f4f7fb 0%,#e7eef7 50%,#d6e1ef 100%);"></div>
<div class="b" style="left:1156px;top:219px;width:1px;height:21px;background:#bcd0e8;"></div>
<div class="b" style="left:816px;top:239px;width:341px;height:1px;background:#c4d4e8;"></div>
<div class="t" style="left:208.5px;width:600px;text-align:center;top:222.64px;font-size:14.6px;line-height:14.6px;color:#000;transform:scaleX(0.904);transform-origin:50% 0;">Référence</div>
<div class="t" style="left:385.0px;width:600px;text-align:center;top:222.64px;font-size:14.6px;line-height:14.6px;color:#000;transform:scaleX(0.904);transform-origin:50% 0;">Désignation</div>
<div class="t" style="left:822px;top:222.64px;font-size:14.6px;line-height:14.6px;color:#000;transform:scaleX(0.904);transform-origin:0 0;">Déf?</div>
<div class="t" style="left:863px;top:222.64px;font-size:14.6px;line-height:14.6px;color:#000;transform:scaleX(0.904);transform-origin:0 0;">For?</div>
<div class="t" style="left:904px;top:222.64px;font-size:14.6px;line-height:14.6px;color:#000;transform:scaleX(0.904);transform-origin:0 0;">Act?</div>
<div class="t" style="left:705.0px;width:600px;text-align:center;top:222.64px;font-size:14.6px;line-height:14.6px;color:#000;transform:scaleX(0.904);transform-origin:50% 0;">Mot Directeur</div>
<div class="t" style="left:755px;width:400px;text-align:right;top:222.64px;font-size:14.6px;line-height:14.6px;color:#000;transform:scaleX(0.904);transform-origin:100% 0;">Déroulement</div>
<div class="b" style="left:463px;top:240px;width:694px;height:20px;background:#efefef;"></div>
<div class="b" style="left:422px;top:240px;width:41px;height:20px;background:#fdd18c;"></div>
<div class="b" style="left:463px;top:260px;width:694px;height:20px;background:#ffffff;"></div>
<div class="b" style="left:422px;top:260px;width:41px;height:20px;background:#e3ebf7;"></div>
<div class="b" style="left:463px;top:280px;width:694px;height:20px;background:#efefef;"></div>
<div class="b" style="left:422px;top:280px;width:41px;height:20px;background:#e3ebf7;"></div>
<div class="b" style="left:463px;top:300px;width:694px;height:20px;background:#ffffff;"></div>
<div class="b" style="left:422px;top:300px;width:41px;height:20px;background:#e3ebf7;"></div>
<div class="b" style="left:463px;top:320px;width:694px;height:20px;background:#efefef;"></div>
<div class="b" style="left:422px;top:320px;width:41px;height:20px;background:#e3ebf7;"></div>
<div class="b" style="left:463px;top:340px;width:694px;height:20px;background:#ffffff;"></div>
<div class="b" style="left:422px;top:340px;width:41px;height:20px;background:#e3ebf7;"></div>
<div class="b" style="left:463px;top:360px;width:694px;height:20px;background:#efefef;"></div>
<div class="b" style="left:422px;top:360px;width:41px;height:20px;background:#e3ebf7;"></div>
<div class="b" style="left:463px;top:380px;width:694px;height:20px;background:#ffffff;"></div>
<div class="b" style="left:422px;top:380px;width:41px;height:20px;background:#e3ebf7;"></div>
<div class="b" style="left:463px;top:400px;width:694px;height:20px;background:#efefef;"></div>
<div class="b" style="left:422px;top:400px;width:41px;height:20px;background:#e3ebf7;"></div>
<div class="b" style="left:463px;top:420px;width:694px;height:20px;background:#ffffff;"></div>
<div class="b" style="left:422px;top:420px;width:41px;height:20px;background:#e3ebf7;"></div>
<div class="b" style="left:463px;top:440px;width:694px;height:20px;background:#efefef;"></div>
<div class="b" style="left:422px;top:440px;width:41px;height:20px;background:#e3ebf7;"></div>
<div class="b" style="left:463px;top:460px;width:694px;height:20px;background:#ffffff;"></div>
<div class="b" style="left:422px;top:460px;width:41px;height:20px;background:#e3ebf7;"></div>
<div class="b" style="left:463px;top:480px;width:694px;height:20px;background:#efefef;"></div>
<div class="b" style="left:422px;top:480px;width:41px;height:20px;background:#e3ebf7;"></div>
<div class="b" style="left:463px;top:500px;width:694px;height:20px;background:#ffffff;"></div>
<div class="b" style="left:422px;top:500px;width:41px;height:20px;background:#e3ebf7;"></div>
<div class="b" style="left:463px;top:520px;width:694px;height:20px;background:#efefef;"></div>
<div class="b" style="left:422px;top:520px;width:41px;height:20px;background:#e3ebf7;"></div>
<div class="b" style="left:463px;top:540px;width:694px;height:20px;background:#ffffff;"></div>
<div class="b" style="left:422px;top:540px;width:41px;height:20px;background:#e3ebf7;"></div>
<div class="b" style="left:463px;top:560px;width:694px;height:20px;background:#efefef;"></div>
<div class="b" style="left:422px;top:560px;width:41px;height:20px;background:#e3ebf7;"></div>
<div class="b" style="left:463px;top:580px;width:694px;height:20px;background:#ffffff;"></div>
<div class="b" style="left:422px;top:580px;width:41px;height:20px;background:#e3ebf7;"></div>
<div class="b" style="left:463px;top:600px;width:694px;height:20px;background:#efefef;"></div>
<div class="b" style="left:422px;top:600px;width:41px;height:20px;background:#e3ebf7;"></div>
<div class="b" style="left:463px;top:620px;width:694px;height:20px;background:#ffffff;"></div>
<div class="b" style="left:422px;top:620px;width:41px;height:20px;background:#e3ebf7;"></div>
<div class="b" style="left:463px;top:640px;width:694px;height:20px;background:#efefef;"></div>
<div class="b" style="left:422px;top:640px;width:41px;height:20px;background:#e3ebf7;"></div>
<div class="b" style="left:463px;top:660px;width:694px;height:20px;background:#ffffff;"></div>
<div class="b" style="left:422px;top:660px;width:41px;height:20px;background:#e3ebf7;"></div>
<div class="b" style="left:463px;top:680px;width:694px;height:20px;background:#efefef;"></div>
<div class="b" style="left:422px;top:680px;width:41px;height:20px;background:#e3ebf7;"></div>
<div class="b" style="left:463px;top:700px;width:694px;height:20px;background:#ffffff;"></div>
<div class="b" style="left:422px;top:700px;width:41px;height:20px;background:#e3ebf7;"></div>
<div class="b" style="left:463px;top:720px;width:694px;height:20px;background:#efefef;"></div>
<div class="b" style="left:422px;top:720px;width:41px;height:20px;background:#e3ebf7;"></div>
<div class="b" style="left:463px;top:740px;width:694px;height:20px;background:#ffffff;"></div>
<div class="b" style="left:422px;top:740px;width:41px;height:20px;background:#e3ebf7;"></div>
<div class="b" style="left:463px;top:760px;width:694px;height:20px;background:#efefef;"></div>
<div class="b" style="left:422px;top:760px;width:41px;height:20px;background:#e3ebf7;"></div>
<div class="b" style="left:422px;top:260px;width:41px;height:1.5px;background:#aabfd8;"></div>
<div class="b" style="left:422px;top:280px;width:41px;height:1.5px;background:#aabfd8;"></div>
<div class="b" style="left:422px;top:300px;width:41px;height:1.5px;background:#aabfd8;"></div>
<div class="b" style="left:422px;top:320px;width:41px;height:1.5px;background:#aabfd8;"></div>
<div class="b" style="left:422px;top:340px;width:41px;height:1.5px;background:#aabfd8;"></div>
<div class="b" style="left:422px;top:360px;width:41px;height:1.5px;background:#aabfd8;"></div>
<div class="b" style="left:422px;top:380px;width:41px;height:1.5px;background:#aabfd8;"></div>
<div class="b" style="left:422px;top:400px;width:41px;height:1.5px;background:#aabfd8;"></div>
<div class="b" style="left:422px;top:420px;width:41px;height:1.5px;background:#aabfd8;"></div>
<div class="b" style="left:422px;top:440px;width:41px;height:1.5px;background:#aabfd8;"></div>
<div class="b" style="left:422px;top:460px;width:41px;height:1.5px;background:#aabfd8;"></div>
<div class="b" style="left:422px;top:480px;width:41px;height:1.5px;background:#aabfd8;"></div>
<div class="b" style="left:422px;top:500px;width:41px;height:1.5px;background:#aabfd8;"></div>
<div class="b" style="left:422px;top:520px;width:41px;height:1.5px;background:#aabfd8;"></div>
<div class="b" style="left:422px;top:540px;width:41px;height:1.5px;background:#aabfd8;"></div>
<div class="b" style="left:422px;top:560px;width:41px;height:1.5px;background:#aabfd8;"></div>
<div class="b" style="left:422px;top:580px;width:41px;height:1.5px;background:#aabfd8;"></div>
<div class="b" style="left:422px;top:600px;width:41px;height:1.5px;background:#aabfd8;"></div>
<div class="b" style="left:422px;top:620px;width:41px;height:1.5px;background:#aabfd8;"></div>
<div class="b" style="left:422px;top:640px;width:41px;height:1.5px;background:#aabfd8;"></div>
<div class="b" style="left:422px;top:660px;width:41px;height:1.5px;background:#aabfd8;"></div>
<div class="b" style="left:422px;top:680px;width:41px;height:1.5px;background:#aabfd8;"></div>
<div class="b" style="left:422px;top:700px;width:41px;height:1.5px;background:#aabfd8;"></div>
<div class="b" style="left:422px;top:720px;width:41px;height:1.5px;background:#aabfd8;"></div>
<div class="b" style="left:422px;top:740px;width:41px;height:1.5px;background:#aabfd8;"></div>
<div class="b" style="left:422px;top:760px;width:41px;height:1.5px;background:#aabfd8;"></div>
<div class="b" style="left:462px;top:240px;width:1px;height:540px;background:#a9bdd6;"></div>
<div class="b" style="left:462px;top:240px;width:1px;height:20px;background:#f0a850;"></div>
<div class="b" style="left:463px;top:260px;width:694px;height:1px;background:repeating-linear-gradient(90deg,#c4c4c4 0 1px,transparent 1px 2px);"></div>
<div class="b" style="left:463px;top:280px;width:694px;height:1px;background:repeating-linear-gradient(90deg,#c4c4c4 0 1px,transparent 1px 2px);"></div>
<div class="b" style="left:463px;top:300px;width:694px;height:1px;background:repeating-linear-gradient(90deg,#c4c4c4 0 1px,transparent 1px 2px);"></div>
<div class="b" style="left:463px;top:320px;width:694px;height:1px;background:repeating-linear-gradient(90deg,#c4c4c4 0 1px,transparent 1px 2px);"></div>
<div class="b" style="left:463px;top:340px;width:694px;height:1px;background:repeating-linear-gradient(90deg,#c4c4c4 0 1px,transparent 1px 2px);"></div>
<div class="b" style="left:463px;top:360px;width:694px;height:1px;background:repeating-linear-gradient(90deg,#c4c4c4 0 1px,transparent 1px 2px);"></div>
<div class="b" style="left:463px;top:380px;width:694px;height:1px;background:repeating-linear-gradient(90deg,#c4c4c4 0 1px,transparent 1px 2px);"></div>
<div class="b" style="left:463px;top:400px;width:694px;height:1px;background:repeating-linear-gradient(90deg,#c4c4c4 0 1px,transparent 1px 2px);"></div>
<div class="b" style="left:463px;top:420px;width:694px;height:1px;background:repeating-linear-gradient(90deg,#c4c4c4 0 1px,transparent 1px 2px);"></div>
<div class="b" style="left:463px;top:440px;width:694px;height:1px;background:repeating-linear-gradient(90deg,#c4c4c4 0 1px,transparent 1px 2px);"></div>
<div class="b" style="left:463px;top:460px;width:694px;height:1px;background:repeating-linear-gradient(90deg,#c4c4c4 0 1px,transparent 1px 2px);"></div>
<div class="b" style="left:463px;top:480px;width:694px;height:1px;background:repeating-linear-gradient(90deg,#c4c4c4 0 1px,transparent 1px 2px);"></div>
<div class="b" style="left:463px;top:500px;width:694px;height:1px;background:repeating-linear-gradient(90deg,#c4c4c4 0 1px,transparent 1px 2px);"></div>
<div class="b" style="left:463px;top:520px;width:694px;height:1px;background:repeating-linear-gradient(90deg,#c4c4c4 0 1px,transparent 1px 2px);"></div>
<div class="b" style="left:463px;top:540px;width:694px;height:1px;background:repeating-linear-gradient(90deg,#c4c4c4 0 1px,transparent 1px 2px);"></div>
<div class="b" style="left:463px;top:560px;width:694px;height:1px;background:repeating-linear-gradient(90deg,#c4c4c4 0 1px,transparent 1px 2px);"></div>
<div class="b" style="left:463px;top:580px;width:694px;height:1px;background:repeating-linear-gradient(90deg,#c4c4c4 0 1px,transparent 1px 2px);"></div>
<div class="b" style="left:463px;top:600px;width:694px;height:1px;background:repeating-linear-gradient(90deg,#c4c4c4 0 1px,transparent 1px 2px);"></div>
<div class="b" style="left:463px;top:620px;width:694px;height:1px;background:repeating-linear-gradient(90deg,#c4c4c4 0 1px,transparent 1px 2px);"></div>
<div class="b" style="left:463px;top:640px;width:694px;height:1px;background:repeating-linear-gradient(90deg,#c4c4c4 0 1px,transparent 1px 2px);"></div>
<div class="b" style="left:463px;top:660px;width:694px;height:1px;background:repeating-linear-gradient(90deg,#c4c4c4 0 1px,transparent 1px 2px);"></div>
<div class="b" style="left:463px;top:680px;width:694px;height:1px;background:repeating-linear-gradient(90deg,#c4c4c4 0 1px,transparent 1px 2px);"></div>
<div class="b" style="left:463px;top:700px;width:694px;height:1px;background:repeating-linear-gradient(90deg,#c4c4c4 0 1px,transparent 1px 2px);"></div>
<div class="b" style="left:463px;top:720px;width:694px;height:1px;background:repeating-linear-gradient(90deg,#c4c4c4 0 1px,transparent 1px 2px);"></div>
<div class="b" style="left:463px;top:740px;width:694px;height:1px;background:repeating-linear-gradient(90deg,#c4c4c4 0 1px,transparent 1px 2px);"></div>
<div class="b" style="left:463px;top:760px;width:694px;height:1px;background:repeating-linear-gradient(90deg,#c4c4c4 0 1px,transparent 1px 2px);"></div>
<div class="b" style="left:463px;top:780px;width:694px;height:1px;background:repeating-linear-gradient(90deg,#c4c4c4 0 1px,transparent 1px 2px);"></div>
<div class="b" style="left:553px;top:240px;width:1px;height:540px;background:repeating-linear-gradient(180deg,#c4c4c4 0 1px,transparent 1px 2px);"></div>
<div class="b" style="left:815px;top:240px;width:1px;height:540px;background:repeating-linear-gradient(180deg,#c4c4c4 0 1px,transparent 1px 2px);"></div>
<div class="b" style="left:856px;top:240px;width:1px;height:540px;background:repeating-linear-gradient(180deg,#c4c4c4 0 1px,transparent 1px 2px);"></div>
<div class="b" style="left:897px;top:240px;width:1px;height:540px;background:repeating-linear-gradient(180deg,#c4c4c4 0 1px,transparent 1px 2px);"></div>
<div class="b" style="left:938px;top:240px;width:1px;height:540px;background:repeating-linear-gradient(180deg,#c4c4c4 0 1px,transparent 1px 2px);"></div>
<div class="b" style="left:1070px;top:240px;width:1px;height:540px;background:repeating-linear-gradient(180deg,#c4c4c4 0 1px,transparent 1px 2px);"></div>
<div class="t" style="left:466.5px;top:243.64px;font-size:14.6px;line-height:14.6px;color:#000;transform:scaleX(0.904);transform-origin:0 0;">IKMArt</div>
<div class="t" style="left:557.5px;top:243.64px;width:285px;overflow:hidden;font-size:14.6px;line-height:14.6px;color:#000;transform:scaleX(0.904);transform-origin:0 0;">Saisie Article</div>
<svg class="b" style="left:828px;top:243px;" width="16" height="16" viewBox="0 0 16 16"><rect x="0.75" y="0.75" width="14.5" height="14.5" fill="#fff" stroke="#333" stroke-width="1.5"/></svg>
<svg class="b" style="left:869px;top:243px;" width="16" height="16" viewBox="0 0 16 16"><rect x="0.75" y="0.75" width="14.5" height="14.5" fill="#fff" stroke="#333" stroke-width="1.5"/></svg>
<svg class="b" style="left:910px;top:243px;" width="16" height="16" viewBox="0 0 16 16"><rect x="0.75" y="0.75" width="14.5" height="14.5" fill="#fff" stroke="#333" stroke-width="1.5"/></svg>
<div class="t" style="left:1075px;top:243.64px;font-size:14.6px;line-height:14.6px;color:#000;transform:scaleX(0.904);transform-origin:0 0;">Séquentiel</div>
<div class="t" style="left:466.5px;top:263.64px;font-size:14.6px;line-height:14.6px;color:#000;transform:scaleX(0.904);transform-origin:0 0;">IKMPsdRdv</div>
<div class="t" style="left:557.5px;top:263.64px;width:285px;overflow:hidden;font-size:14.6px;line-height:14.6px;color:#000;transform:scaleX(0.904);transform-origin:0 0;">Tuto PSD exemple prise de RDV</div>
<svg class="b" style="left:828px;top:263px;" width="16" height="16" viewBox="0 0 16 16"><rect x="0.75" y="0.75" width="14.5" height="14.5" fill="#fff" stroke="#333" stroke-width="1.5"/></svg>
<svg class="b" style="left:869px;top:263px;" width="16" height="16" viewBox="0 0 16 16"><rect x="0.75" y="0.75" width="14.5" height="14.5" fill="#fff" stroke="#333" stroke-width="1.5"/></svg>
<svg class="b" style="left:910px;top:263px;" width="16" height="16" viewBox="0 0 16 16"><rect x="0.75" y="0.75" width="14.5" height="14.5" fill="#fff" stroke="#333" stroke-width="1.5"/></svg>
<div class="t" style="left:1075px;top:263.64px;font-size:14.6px;line-height:14.6px;color:#000;transform:scaleX(0.904);transform-origin:0 0;">Séquentiel</div>
<div class="t" style="left:466.5px;top:283.64px;font-size:14.6px;line-height:14.6px;color:#000;transform:scaleX(0.904);transform-origin:0 0;">IMDCDefMCR</div>
<div class="t" style="left:557.5px;top:283.64px;width:285px;overflow:hidden;font-size:14.6px;line-height:14.6px;color:#000;transform:scaleX(0.904);transform-origin:0 0;">Definition Modele Multi Chassis</div>
<svg class="b" style="left:828px;top:283px;" width="16" height="16" viewBox="0 0 16 16"><rect x="0.75" y="0.75" width="14.5" height="14.5" fill="#fff" stroke="#333" stroke-width="1.5"/></svg>
<svg class="b" style="left:869px;top:283px;" width="16" height="16" viewBox="0 0 16 16"><rect x="0.75" y="0.75" width="14.5" height="14.5" fill="#fff" stroke="#333" stroke-width="1.5"/></svg>
<svg class="b" style="left:910px;top:283px;" width="16" height="16" viewBox="0 0 16 16"><rect x="0.75" y="0.75" width="14.5" height="14.5" fill="#fff" stroke="#333" stroke-width="1.5"/></svg>
<div class="t" style="left:466.5px;top:303.64px;font-size:14.6px;line-height:14.6px;color:#000;transform:scaleX(0.904);transform-origin:0 0;">IMDDefMoC</div>
<div class="t" style="left:557.5px;top:303.64px;width:285px;overflow:hidden;font-size:14.6px;line-height:14.6px;color:#000;transform:scaleX(0.904);transform-origin:0 0;">Definition Modele Cintré</div>
<svg class="b" style="left:828px;top:303px;" width="16" height="16" viewBox="0 0 16 16"><rect x="0.75" y="0.75" width="14.5" height="14.5" fill="#fff" stroke="#333" stroke-width="1.5"/></svg>
<svg class="b" style="left:869px;top:303px;" width="16" height="16" viewBox="0 0 16 16"><rect x="0.75" y="0.75" width="14.5" height="14.5" fill="#fff" stroke="#333" stroke-width="1.5"/></svg>
<svg class="b" style="left:910px;top:303px;" width="16" height="16" viewBox="0 0 16 16"><rect x="0.75" y="0.75" width="14.5" height="14.5" fill="#fff" stroke="#333" stroke-width="1.5"/></svg>
<div class="t" style="left:466.5px;top:323.64px;font-size:14.6px;line-height:14.6px;color:#000;transform:scaleX(0.904);transform-origin:0 0;">IMDDefMoR</div>
<div class="t" style="left:557.5px;top:323.64px;width:285px;overflow:hidden;font-size:14.6px;line-height:14.6px;color:#000;transform:scaleX(0.904);transform-origin:0 0;">Definition Modele Rectangulaire</div>
<svg class="b" style="left:828px;top:323px;" width="16" height="16" viewBox="0 0 16 16"><rect x="0.75" y="0.75" width="14.5" height="14.5" fill="#fff" stroke="#333" stroke-width="1.5"/></svg>
<svg class="b" style="left:869px;top:323px;" width="16" height="16" viewBox="0 0 16 16"><rect x="0.75" y="0.75" width="14.5" height="14.5" fill="#fff" stroke="#333" stroke-width="1.5"/></svg>
<svg class="b" style="left:910px;top:323px;" width="16" height="16" viewBox="0 0 16 16"><rect x="0.75" y="0.75" width="14.5" height="14.5" fill="#fff" stroke="#333" stroke-width="1.5"/></svg>
<div class="t" style="left:466.5px;top:343.64px;font-size:14.6px;line-height:14.6px;color:#000;transform:scaleX(0.904);transform-origin:0 0;">IMdDetFerm</div>
<div class="t" style="left:557.5px;top:343.64px;width:285px;overflow:hidden;font-size:14.6px;line-height:14.6px;color:#000;transform:scaleX(0.904);transform-origin:0 0;">SDD Fermeture</div>
<svg class="b" style="left:828px;top:343px;" width="16" height="16" viewBox="0 0 16 16"><rect x="0.75" y="0.75" width="14.5" height="14.5" fill="#fff" stroke="#333" stroke-width="1.5"/></svg>
<svg class="b" style="left:869px;top:343px;" width="16" height="16" viewBox="0 0 16 16"><rect x="0.75" y="0.75" width="14.5" height="14.5" fill="#fff" stroke="#333" stroke-width="1.5"/></svg>
<svg class="b" style="left:910px;top:343px;" width="16" height="16" viewBox="0 0 16 16"><rect x="0.75" y="0.75" width="14.5" height="14.5" fill="#fff" stroke="#333" stroke-width="1.5"/></svg>
<div class="t" style="left:1075px;top:343.64px;font-size:14.6px;line-height:14.6px;color:#000;transform:scaleX(0.904);transform-origin:0 0;">Séquentiel</div>
<div class="t" style="left:466.5px;top:363.64px;font-size:14.6px;line-height:14.6px;color:#000;transform:scaleX(0.904);transform-origin:0 0;">IMdDetOuv</div>
<div class="t" style="left:557.5px;top:363.64px;width:285px;overflow:hidden;font-size:14.6px;line-height:14.6px;color:#000;transform:scaleX(0.904);transform-origin:0 0;">SDD Ouvrant</div>
<svg class="b" style="left:828px;top:363px;" width="16" height="16" viewBox="0 0 16 16"><rect x="0.75" y="0.75" width="14.5" height="14.5" fill="#fff" stroke="#333" stroke-width="1.5"/></svg>
<svg class="b" style="left:869px;top:363px;" width="16" height="16" viewBox="0 0 16 16"><rect x="0.75" y="0.75" width="14.5" height="14.5" fill="#fff" stroke="#333" stroke-width="1.5"/></svg>
<svg class="b" style="left:910px;top:363px;" width="16" height="16" viewBox="0 0 16 16"><rect x="0.75" y="0.75" width="14.5" height="14.5" fill="#fff" stroke="#333" stroke-width="1.5"/></svg>
<div class="t" style="left:1075px;top:363.64px;font-size:14.6px;line-height:14.6px;color:#000;transform:scaleX(0.904);transform-origin:0 0;">Séquentiel</div>
<div class="t" style="left:466.5px;top:383.64px;font-size:14.6px;line-height:14.6px;color:#000;transform:scaleX(0.904);transform-origin:0 0;">IMDDTCDM</div>
<div class="t" style="left:557.5px;top:383.64px;width:285px;overflow:hidden;font-size:14.6px;line-height:14.6px;color:#000;transform:scaleX(0.904);transform-origin:0 0;">Parametrage DT Calcul Dimensionnel</div>
<svg class="b" style="left:828px;top:383px;" width="16" height="16" viewBox="0 0 16 16"><rect x="0.75" y="0.75" width="14.5" height="14.5" fill="#fff" stroke="#333" stroke-width="1.5"/></svg>
<svg class="b" style="left:869px;top:383px;" width="16" height="16" viewBox="0 0 16 16"><rect x="0.75" y="0.75" width="14.5" height="14.5" fill="#fff" stroke="#333" stroke-width="1.5"/></svg>
<svg class="b" style="left:910px;top:383px;" width="16" height="16" viewBox="0 0 16 16"><rect x="0.75" y="0.75" width="14.5" height="14.5" fill="#fff" stroke="#333" stroke-width="1.5"/></svg>
<div class="t" style="left:1075px;top:383.64px;font-size:14.6px;line-height:14.6px;color:#000;transform:scaleX(0.904);transform-origin:0 0;">Séquentiel</div>
<div class="t" style="left:466.5px;top:403.64px;font-size:14.6px;line-height:14.6px;color:#000;transform:scaleX(0.904);transform-origin:0 0;">IMDDTLib</div>
<div class="t" style="left:557.5px;top:403.64px;width:285px;overflow:hidden;font-size:14.6px;line-height:14.6px;color:#000;transform:scaleX(0.904);transform-origin:0 0;">Parametrage DT Librairie</div>
<svg class="b" style="left:828px;top:403px;" width="16" height="16" viewBox="0 0 16 16"><rect x="0.75" y="0.75" width="14.5" height="14.5" fill="#fff" stroke="#333" stroke-width="1.5"/></svg>
<svg class="b" style="left:869px;top:403px;" width="16" height="16" viewBox="0 0 16 16"><rect x="0.75" y="0.75" width="14.5" height="14.5" fill="#fff" stroke="#333" stroke-width="1.5"/></svg>
<svg class="b" style="left:910px;top:403px;" width="16" height="16" viewBox="0 0 16 16"><rect x="0.75" y="0.75" width="14.5" height="14.5" fill="#fff" stroke="#333" stroke-width="1.5"/></svg>
<div class="t" style="left:1075px;top:403.64px;font-size:14.6px;line-height:14.6px;color:#000;transform:scaleX(0.904);transform-origin:0 0;">Séquentiel</div>
<div class="t" style="left:466.5px;top:423.64px;font-size:14.6px;line-height:14.6px;color:#000;transform:scaleX(0.904);transform-origin:0 0;">IMDInter</div>
<div class="t" style="left:557.5px;top:423.64px;width:285px;overflow:hidden;font-size:14.6px;line-height:14.6px;color:#000;transform:scaleX(0.904);transform-origin:0 0;">Intercalaires</div>
<svg class="b" style="left:828px;top:423px;" width="16" height="16" viewBox="0 0 16 16"><rect x="0.75" y="0.75" width="14.5" height="14.5" fill="#fff" stroke="#333" stroke-width="1.5"/></svg>
<svg class="b" style="left:869px;top:423px;" width="16" height="16" viewBox="0 0 16 16"><rect x="0.75" y="0.75" width="14.5" height="14.5" fill="#fff" stroke="#333" stroke-width="1.5"/></svg>
<svg class="b" style="left:910px;top:423px;" width="16" height="16" viewBox="0 0 16 16"><rect x="0.75" y="0.75" width="14.5" height="14.5" fill="#fff" stroke="#333" stroke-width="1.5"/></svg>
<div class="t" style="left:1075px;top:423.64px;font-size:14.6px;line-height:14.6px;color:#000;transform:scaleX(0.904);transform-origin:0 0;">Séquentiel</div>
<div class="t" style="left:466.5px;top:443.64px;font-size:14.6px;line-height:14.6px;color:#000;transform:scaleX(0.904);transform-origin:0 0;">IMDLame</div>
<div class="t" style="left:557.5px;top:443.64px;width:285px;overflow:hidden;font-size:14.6px;line-height:14.6px;color:#000;transform:scaleX(0.904);transform-origin:0 0;">Lames</div>
<svg class="b" style="left:828px;top:443px;" width="16" height="16" viewBox="0 0 16 16"><rect x="0.75" y="0.75" width="14.5" height="14.5" fill="#fff" stroke="#333" stroke-width="1.5"/></svg>
<svg class="b" style="left:869px;top:443px;" width="16" height="16" viewBox="0 0 16 16"><rect x="0.75" y="0.75" width="14.5" height="14.5" fill="#fff" stroke="#333" stroke-width="1.5"/></svg>
<svg class="b" style="left:910px;top:443px;" width="16" height="16" viewBox="0 0 16 16"><rect x="0.75" y="0.75" width="14.5" height="14.5" fill="#fff" stroke="#333" stroke-width="1.5"/></svg>
<div class="t" style="left:1075px;top:443.64px;font-size:14.6px;line-height:14.6px;color:#000;transform:scaleX(0.904);transform-origin:0 0;">Séquentiel</div>
<div class="t" style="left:466.5px;top:463.64px;font-size:14.6px;line-height:14.6px;color:#000;transform:scaleX(0.904);transform-origin:0 0;">IMdMulCha</div>
<div class="t" style="left:557.5px;top:463.64px;width:285px;overflow:hidden;font-size:14.6px;line-height:14.6px;color:#000;transform:scaleX(0.904);transform-origin:0 0;">SDD Multi Chassis</div>
<svg class="b" style="left:828px;top:463px;" width="16" height="16" viewBox="0 0 16 16"><rect x="0.75" y="0.75" width="14.5" height="14.5" fill="#fff" stroke="#333" stroke-width="1.5"/></svg>
<svg class="b" style="left:869px;top:463px;" width="16" height="16" viewBox="0 0 16 16"><rect x="0.75" y="0.75" width="14.5" height="14.5" fill="#fff" stroke="#333" stroke-width="1.5"/></svg>
<svg class="b" style="left:910px;top:463px;" width="16" height="16" viewBox="0 0 16 16"><rect x="0.75" y="0.75" width="14.5" height="14.5" fill="#fff" stroke="#333" stroke-width="1.5"/></svg>
<div class="t" style="left:1075px;top:463.64px;font-size:14.6px;line-height:14.6px;color:#000;transform:scaleX(0.904);transform-origin:0 0;">Séquentiel</div>
<div class="t" style="left:466.5px;top:483.64px;font-size:14.6px;line-height:14.6px;color:#000;transform:scaleX(0.904);transform-origin:0 0;">IMdMulCou</div>
<div class="t" style="left:557.5px;top:483.64px;width:285px;overflow:hidden;font-size:14.6px;line-height:14.6px;color:#000;transform:scaleX(0.904);transform-origin:0 0;">SDD Multi Coulissants</div>
<svg class="b" style="left:828px;top:483px;" width="16" height="16" viewBox="0 0 16 16"><rect x="0.75" y="0.75" width="14.5" height="14.5" fill="#fff" stroke="#333" stroke-width="1.5"/></svg>
<svg class="b" style="left:869px;top:483px;" width="16" height="16" viewBox="0 0 16 16"><rect x="0.75" y="0.75" width="14.5" height="14.5" fill="#fff" stroke="#333" stroke-width="1.5"/></svg>
<svg class="b" style="left:910px;top:483px;" width="16" height="16" viewBox="0 0 16 16"><rect x="0.75" y="0.75" width="14.5" height="14.5" fill="#fff" stroke="#333" stroke-width="1.5"/></svg>
<div class="t" style="left:1075px;top:483.64px;font-size:14.6px;line-height:14.6px;color:#000;transform:scaleX(0.904);transform-origin:0 0;">Séquentiel</div>
<div class="t" style="left:466.5px;top:503.64px;font-size:14.6px;line-height:14.6px;color:#000;transform:scaleX(0.904);transform-origin:0 0;">IMdMulRem</div>
<div class="t" style="left:557.5px;top:503.64px;width:285px;overflow:hidden;font-size:14.6px;line-height:14.6px;color:#000;transform:scaleX(0.904);transform-origin:0 0;">SDD Multi Remplissages</div>
<svg class="b" style="left:828px;top:503px;" width="16" height="16" viewBox="0 0 16 16"><rect x="0.75" y="0.75" width="14.5" height="14.5" fill="#fff" stroke="#333" stroke-width="1.5"/></svg>
<svg class="b" style="left:869px;top:503px;" width="16" height="16" viewBox="0 0 16 16"><rect x="0.75" y="0.75" width="14.5" height="14.5" fill="#fff" stroke="#333" stroke-width="1.5"/></svg>
<svg class="b" style="left:910px;top:503px;" width="16" height="16" viewBox="0 0 16 16"><rect x="0.75" y="0.75" width="14.5" height="14.5" fill="#fff" stroke="#333" stroke-width="1.5"/></svg>
<div class="t" style="left:1075px;top:503.64px;font-size:14.6px;line-height:14.6px;color:#000;transform:scaleX(0.904);transform-origin:0 0;">Séquentiel</div>
<div class="t" style="left:466.5px;top:523.64px;font-size:14.6px;line-height:14.6px;color:#000;transform:scaleX(0.904);transform-origin:0 0;">IMdMulZon</div>
<div class="t" style="left:557.5px;top:523.64px;width:285px;overflow:hidden;font-size:14.6px;line-height:14.6px;color:#000;transform:scaleX(0.904);transform-origin:0 0;">SDD Multi Zones</div>
<svg class="b" style="left:828px;top:523px;" width="16" height="16" viewBox="0 0 16 16"><rect x="0.75" y="0.75" width="14.5" height="14.5" fill="#fff" stroke="#333" stroke-width="1.5"/></svg>
<svg class="b" style="left:869px;top:523px;" width="16" height="16" viewBox="0 0 16 16"><rect x="0.75" y="0.75" width="14.5" height="14.5" fill="#fff" stroke="#333" stroke-width="1.5"/></svg>
<svg class="b" style="left:910px;top:523px;" width="16" height="16" viewBox="0 0 16 16"><rect x="0.75" y="0.75" width="14.5" height="14.5" fill="#fff" stroke="#333" stroke-width="1.5"/></svg>
<div class="t" style="left:1075px;top:523.64px;font-size:14.6px;line-height:14.6px;color:#000;transform:scaleX(0.904);transform-origin:0 0;">Séquentiel</div>
<div class="t" style="left:466.5px;top:543.64px;font-size:14.6px;line-height:14.6px;color:#000;transform:scaleX(0.904);transform-origin:0 0;">IMdOptRem</div>
<div class="t" style="left:557.5px;top:543.64px;width:285px;overflow:hidden;font-size:14.6px;line-height:14.6px;color:#000;transform:scaleX(0.904);transform-origin:0 0;">Option Remplissage</div>
<svg class="b" style="left:828px;top:543px;" width="16" height="16" viewBox="0 0 16 16"><rect x="0.75" y="0.75" width="14.5" height="14.5" fill="#fff" stroke="#333" stroke-width="1.5"/></svg>
<svg class="b" style="left:869px;top:543px;" width="16" height="16" viewBox="0 0 16 16"><rect x="0.75" y="0.75" width="14.5" height="14.5" fill="#fff" stroke="#333" stroke-width="1.5"/></svg>
<svg class="b" style="left:910px;top:543px;" width="16" height="16" viewBox="0 0 16 16"><rect x="0.75" y="0.75" width="14.5" height="14.5" fill="#fff" stroke="#333" stroke-width="1.5"/></svg>
<div class="t" style="left:1075px;top:543.64px;font-size:14.6px;line-height:14.6px;color:#000;transform:scaleX(0.904);transform-origin:0 0;">Séquentiel</div>
<div class="t" style="left:466.5px;top:563.64px;font-size:14.6px;line-height:14.6px;color:#000;transform:scaleX(0.904);transform-origin:0 0;">IMDPannea</div>
<div class="t" style="left:557.5px;top:563.64px;width:285px;overflow:hidden;font-size:14.6px;line-height:14.6px;color:#000;transform:scaleX(0.904);transform-origin:0 0;">Panneaux</div>
<svg class="b" style="left:828px;top:563px;" width="16" height="16" viewBox="0 0 16 16"><rect x="0.75" y="0.75" width="14.5" height="14.5" fill="#fff" stroke="#333" stroke-width="1.5"/></svg>
<svg class="b" style="left:869px;top:563px;" width="16" height="16" viewBox="0 0 16 16"><rect x="0.75" y="0.75" width="14.5" height="14.5" fill="#fff" stroke="#333" stroke-width="1.5"/></svg>
<svg class="b" style="left:910px;top:563px;" width="16" height="16" viewBox="0 0 16 16"><rect x="0.75" y="0.75" width="14.5" height="14.5" fill="#fff" stroke="#333" stroke-width="1.5"/></svg>
<div class="t" style="left:1075px;top:563.64px;font-size:14.6px;line-height:14.6px;color:#000;transform:scaleX(0.904);transform-origin:0 0;">Séquentiel</div>
<div class="t" style="left:466.5px;top:583.64px;font-size:14.6px;line-height:14.6px;color:#000;transform:scaleX(0.904);transform-origin:0 0;">IMdPoOpRe</div>
<div class="t" style="left:557.5px;top:583.64px;width:285px;overflow:hidden;font-size:14.6px;line-height:14.6px;color:#000;transform:scaleX(0.904);transform-origin:0 0;">Option Remplissage Portail</div>
<svg class="b" style="left:828px;top:583px;" width="16" height="16" viewBox="0 0 16 16"><rect x="0.75" y="0.75" width="14.5" height="14.5" fill="#fff" stroke="#333" stroke-width="1.5"/></svg>
<svg class="b" style="left:869px;top:583px;" width="16" height="16" viewBox="0 0 16 16"><rect x="0.75" y="0.75" width="14.5" height="14.5" fill="#fff" stroke="#333" stroke-width="1.5"/></svg>
<svg class="b" style="left:910px;top:583px;" width="16" height="16" viewBox="0 0 16 16"><rect x="0.75" y="0.75" width="14.5" height="14.5" fill="#fff" stroke="#333" stroke-width="1.5"/></svg>
<div class="t" style="left:1075px;top:583.64px;font-size:14.6px;line-height:14.6px;color:#000;transform:scaleX(0.904);transform-origin:0 0;">Séquentiel</div>
<div class="t" style="left:466.5px;top:603.64px;font-size:14.6px;line-height:14.6px;color:#000;transform:scaleX(0.904);transform-origin:0 0;">IMDRenfor</div>
<div class="t" style="left:557.5px;top:603.64px;width:285px;overflow:hidden;font-size:14.6px;line-height:14.6px;color:#000;transform:scaleX(0.904);transform-origin:0 0;">Renforts</div>
<svg class="b" style="left:828px;top:603px;" width="16" height="16" viewBox="0 0 16 16"><rect x="0.75" y="0.75" width="14.5" height="14.5" fill="#fff" stroke="#333" stroke-width="1.5"/></svg>
<svg class="b" style="left:869px;top:603px;" width="16" height="16" viewBox="0 0 16 16"><rect x="0.75" y="0.75" width="14.5" height="14.5" fill="#fff" stroke="#333" stroke-width="1.5"/></svg>
<svg class="b" style="left:910px;top:603px;" width="16" height="16" viewBox="0 0 16 16"><rect x="0.75" y="0.75" width="14.5" height="14.5" fill="#fff" stroke="#333" stroke-width="1.5"/></svg>
<div class="t" style="left:1075px;top:603.64px;font-size:14.6px;line-height:14.6px;color:#000;transform:scaleX(0.904);transform-origin:0 0;">Séquentiel</div>
<div class="t" style="left:466.5px;top:623.64px;font-size:14.6px;line-height:14.6px;color:#000;transform:scaleX(0.904);transform-origin:0 0;">IMdTypRem</div>
<div class="t" style="left:557.5px;top:623.64px;width:285px;overflow:hidden;font-size:14.6px;line-height:14.6px;color:#000;transform:scaleX(0.904);transform-origin:0 0;">Type remplissage</div>
<svg class="b" style="left:828px;top:623px;" width="16" height="16" viewBox="0 0 16 16"><rect x="0.75" y="0.75" width="14.5" height="14.5" fill="#fff" stroke="#333" stroke-width="1.5"/></svg>
<svg class="b" style="left:869px;top:623px;" width="16" height="16" viewBox="0 0 16 16"><rect x="0.75" y="0.75" width="14.5" height="14.5" fill="#fff" stroke="#333" stroke-width="1.5"/></svg>
<svg class="b" style="left:910px;top:623px;" width="16" height="16" viewBox="0 0 16 16"><rect x="0.75" y="0.75" width="14.5" height="14.5" fill="#fff" stroke="#333" stroke-width="1.5"/></svg>
<div class="t" style="left:1075px;top:623.64px;font-size:14.6px;line-height:14.6px;color:#000;transform:scaleX(0.904);transform-origin:0 0;">Séquentiel</div>
<div class="t" style="left:466.5px;top:643.64px;font-size:14.6px;line-height:14.6px;color:#000;transform:scaleX(0.904);transform-origin:0 0;">IMDVitrag</div>
<div class="t" style="left:557.5px;top:643.64px;width:285px;overflow:hidden;font-size:14.6px;line-height:14.6px;color:#000;transform:scaleX(0.904);transform-origin:0 0;">Vitrages</div>
<svg class="b" style="left:828px;top:643px;" width="16" height="16" viewBox="0 0 16 16"><rect x="0.75" y="0.75" width="14.5" height="14.5" fill="#fff" stroke="#333" stroke-width="1.5"/></svg>
<svg class="b" style="left:869px;top:643px;" width="16" height="16" viewBox="0 0 16 16"><rect x="0.75" y="0.75" width="14.5" height="14.5" fill="#fff" stroke="#333" stroke-width="1.5"/></svg>
<svg class="b" style="left:910px;top:643px;" width="16" height="16" viewBox="0 0 16 16"><rect x="0.75" y="0.75" width="14.5" height="14.5" fill="#fff" stroke="#333" stroke-width="1.5"/></svg>
<div class="t" style="left:1075px;top:643.64px;font-size:14.6px;line-height:14.6px;color:#000;transform:scaleX(0.904);transform-origin:0 0;">Séquentiel</div>
<div class="t" style="left:466.5px;top:663.64px;font-size:14.6px;line-height:14.6px;color:#000;transform:scaleX(0.904);transform-origin:0 0;">INoComNom</div>
<div class="t" style="left:557.5px;top:663.64px;width:285px;overflow:hidden;font-size:14.6px;line-height:14.6px;color:#000;transform:scaleX(0.904);transform-origin:0 0;">Psd critere / Doc INoComNom</div>
<svg class="b" style="left:828px;top:663px;" width="16" height="16" viewBox="0 0 16 16"><rect x="0.75" y="0.75" width="14.5" height="14.5" fill="#fff" stroke="#333" stroke-width="1.5"/></svg>
<svg class="b" style="left:869px;top:663px;" width="16" height="16" viewBox="0 0 16 16"><rect x="0.75" y="0.75" width="14.5" height="14.5" fill="#fff" stroke="#333" stroke-width="1.5"/></svg>
<svg class="b" style="left:910px;top:663px;" width="16" height="16" viewBox="0 0 16 16"><rect x="0.75" y="0.75" width="14.5" height="14.5" fill="#fff" stroke="#333" stroke-width="1.5"/></svg>
<div class="t" style="left:1075px;top:663.64px;font-size:14.6px;line-height:14.6px;color:#000;transform:scaleX(0.904);transform-origin:0 0;">Séquentiel</div>
<div class="t" style="left:466.5px;top:683.64px;font-size:14.6px;line-height:14.6px;color:#000;transform:scaleX(0.904);transform-origin:0 0;">INoDTNom</div>
<div class="t" style="left:557.5px;top:683.64px;width:285px;overflow:hidden;font-size:14.6px;line-height:14.6px;color:#000;transform:scaleX(0.904);transform-origin:0 0;">Parametres DT Nomenclature</div>
<svg class="b" style="left:828px;top:683px;" width="16" height="16" viewBox="0 0 16 16"><rect x="0.75" y="0.75" width="14.5" height="14.5" fill="#fff" stroke="#333" stroke-width="1.5"/></svg>
<svg class="b" style="left:869px;top:683px;" width="16" height="16" viewBox="0 0 16 16"><rect x="0.75" y="0.75" width="14.5" height="14.5" fill="#fff" stroke="#333" stroke-width="1.5"/></svg>
<svg class="b" style="left:910px;top:683px;" width="16" height="16" viewBox="0 0 16 16"><rect x="0.75" y="0.75" width="14.5" height="14.5" fill="#fff" stroke="#333" stroke-width="1.5"/></svg>
<div class="t" style="left:1075px;top:683.64px;font-size:14.6px;line-height:14.6px;color:#000;transform:scaleX(0.904);transform-origin:0 0;">Séquentiel</div>
<div class="t" style="left:466.5px;top:703.64px;font-size:14.6px;line-height:14.6px;color:#000;transform:scaleX(0.904);transform-origin:0 0;">INoDupPLie</div>
<div class="t" style="left:557.5px;top:703.64px;width:285px;overflow:hidden;font-size:14.6px;line-height:14.6px;color:#000;transform:scaleX(0.904);transform-origin:0 0;">Duplication Parametrage Autre Nomenclature</div>
<svg class="b" style="left:828px;top:703px;" width="16" height="16" viewBox="0 0 16 16"><rect x="0.75" y="0.75" width="14.5" height="14.5" fill="#fff" stroke="#333" stroke-width="1.5"/><path d="M3,8 L6.3,11.2 L13,4" stroke="#444" stroke-width="1.6" fill="none"/></svg>
<svg class="b" style="left:869px;top:703px;" width="16" height="16" viewBox="0 0 16 16"><rect x="0.75" y="0.75" width="14.5" height="14.5" fill="#fff" stroke="#333" stroke-width="1.5"/><path d="M3,8 L6.3,11.2 L13,4" stroke="#444" stroke-width="1.6" fill="none"/></svg>
<svg class="b" style="left:910px;top:703px;" width="16" height="16" viewBox="0 0 16 16"><rect x="0.75" y="0.75" width="14.5" height="14.5" fill="#fff" stroke="#333" stroke-width="1.5"/></svg>
<div class="t" style="left:942.5px;top:703.64px;font-size:14.6px;line-height:14.6px;color:#000;transform:scaleX(0.904);transform-origin:0 0;">ISIA</div>
<div class="t" style="left:1075px;top:703.64px;font-size:14.6px;line-height:14.6px;color:#000;transform:scaleX(0.904);transform-origin:0 0;">Séquentiel</div>
<div class="t" style="left:466.5px;top:723.64px;font-size:14.6px;line-height:14.6px;color:#000;transform:scaleX(0.904);transform-origin:0 0;">INoITRefPtr</div>
<div class="t" style="left:557.5px;top:723.64px;width:285px;overflow:hidden;font-size:14.6px;line-height:14.6px;color:#000;transform:scaleX(0.904);transform-origin:0 0;">Aide saisie réf. pointeur IT</div>
<svg class="b" style="left:828px;top:723px;" width="16" height="16" viewBox="0 0 16 16"><rect x="0.75" y="0.75" width="14.5" height="14.5" fill="#fff" stroke="#333" stroke-width="1.5"/><path d="M3,8 L6.3,11.2 L13,4" stroke="#444" stroke-width="1.6" fill="none"/></svg>
<svg class="b" style="left:869px;top:723px;" width="16" height="16" viewBox="0 0 16 16"><rect x="0.75" y="0.75" width="14.5" height="14.5" fill="#fff" stroke="#333" stroke-width="1.5"/><path d="M3,8 L6.3,11.2 L13,4" stroke="#444" stroke-width="1.6" fill="none"/></svg>
<svg class="b" style="left:910px;top:723px;" width="16" height="16" viewBox="0 0 16 16"><rect x="0.75" y="0.75" width="14.5" height="14.5" fill="#fff" stroke="#333" stroke-width="1.5"/></svg>
<div class="t" style="left:942.5px;top:723.64px;font-size:14.6px;line-height:14.6px;color:#000;transform:scaleX(0.904);transform-origin:0 0;">ISIA</div>
<div class="t" style="left:1075px;top:723.64px;font-size:14.6px;line-height:14.6px;color:#000;transform:scaleX(0.904);transform-origin:0 0;">Séquentiel</div>
<div class="t" style="left:466.5px;top:743.64px;font-size:14.6px;line-height:14.6px;color:#000;transform:scaleX(0.904);transform-origin:0 0;">INoRefNom</div>
<div class="t" style="left:557.5px;top:743.64px;width:285px;overflow:hidden;font-size:14.6px;line-height:14.6px;color:#000;transform:scaleX(0.904);transform-origin:0 0;">Ref Nomenclature Generique</div>
<svg class="b" style="left:828px;top:743px;" width="16" height="16" viewBox="0 0 16 16"><rect x="0.75" y="0.75" width="14.5" height="14.5" fill="#fff" stroke="#333" stroke-width="1.5"/><path d="M3,8 L6.3,11.2 L13,4" stroke="#444" stroke-width="1.6" fill="none"/></svg>
<svg class="b" style="left:869px;top:743px;" width="16" height="16" viewBox="0 0 16 16"><rect x="0.75" y="0.75" width="14.5" height="14.5" fill="#fff" stroke="#333" stroke-width="1.5"/><path d="M3,8 L6.3,11.2 L13,4" stroke="#444" stroke-width="1.6" fill="none"/></svg>
<svg class="b" style="left:910px;top:743px;" width="16" height="16" viewBox="0 0 16 16"><rect x="0.75" y="0.75" width="14.5" height="14.5" fill="#fff" stroke="#333" stroke-width="1.5"/></svg>
<div class="t" style="left:1075px;top:743.64px;font-size:14.6px;line-height:14.6px;color:#000;transform:scaleX(0.904);transform-origin:0 0;">Séquentiel</div>
<div class="t" style="left:466.5px;top:763.64px;font-size:14.6px;line-height:14.6px;color:#000;transform:scaleX(0.904);transform-origin:0 0;">IP7DupMCo</div>
<div class="t" style="left:557.5px;top:763.64px;width:285px;overflow:hidden;font-size:14.6px;line-height:14.6px;color:#000;transform:scaleX(0.904);transform-origin:0 0;">Dup Modele Correspondance / Elcia</div>
<svg class="b" style="left:828px;top:763px;" width="16" height="16" viewBox="0 0 16 16"><rect x="0.75" y="0.75" width="14.5" height="14.5" fill="#fff" stroke="#333" stroke-width="1.5"/><path d="M3,8 L6.3,11.2 L13,4" stroke="#444" stroke-width="1.6" fill="none"/></svg>
<svg class="b" style="left:869px;top:763px;" width="16" height="16" viewBox="0 0 16 16"><rect x="0.75" y="0.75" width="14.5" height="14.5" fill="#fff" stroke="#333" stroke-width="1.5"/><path d="M3,8 L6.3,11.2 L13,4" stroke="#444" stroke-width="1.6" fill="none"/></svg>
<svg class="b" style="left:910px;top:763px;" width="16" height="16" viewBox="0 0 16 16"><rect x="0.75" y="0.75" width="14.5" height="14.5" fill="#fff" stroke="#333" stroke-width="1.5"/></svg>
<div class="t" style="left:942.5px;top:763.64px;font-size:14.6px;line-height:14.6px;color:#000;transform:scaleX(0.904);transform-origin:0 0;">ISIA</div>
<div class="t" style="left:1075px;top:763.64px;font-size:14.6px;line-height:14.6px;color:#000;transform:scaleX(0.904);transform-origin:0 0;">Séquentiel</div>
<div class="b" style="left:422px;top:240px;width:132px;height:1.2px;background:#eea457;"></div>
<div class="b" style="left:554px;top:240.8px;width:263px;height:1.8px;background:#4a5664;"></div>
<div class="b" style="left:553px;top:242px;width:3px;height:20px;background:#0a0a0a;"></div>
<div class="b" style="left:814px;top:242px;width:3px;height:20px;background:#0a0a0a;"></div>
<div class="b" style="left:553px;top:259px;width:264px;height:3px;background:#0a0a0a;"></div>
<div class="b" style="left:1157px;top:219px;width:20px;height:557px;background:#7196c1;"></div>
<div class="b" style="left:1177px;top:218px;width:1.6px;height:558px;background:#6a6f74;"></div>
<div class="b" style="left:1158px;top:219px;width:19px;height:20px;background:linear-gradient(90deg,#dce9f9 50%,#c9dcf4 50%);border:1px solid #5d7fa8;box-sizing:border-box;"></div>
<svg class="b" style="left:1162px;top:224px;" width="12" height="8" viewBox="0 0 12 8"><path d="M0.5,7 L6,1 L11.5,7Z" fill="#3a4a6a"/></svg>
<div class="b" style="left:1158px;top:506px;width:19px;height:203px;background:linear-gradient(90deg,#dce9f9 50%,#c9dcf4 50%);border:1px solid #5d7fa8;box-sizing:border-box;"></div>
<div class="b" style="left:1178px;top:211.5px;width:165px;height:564.5px;background:#f0f0f0;"></div>
<div class="b" style="left:1186px;top:246px;width:1px;height:530px;background:#a0a0a0;"></div>
<div class="b" style="left:1187px;top:246px;width:156px;height:530px;background:#f0f0f0;"></div>
<svg class="b" style="left:1185px;top:221px;" width="158" height="27" viewBox="0 0 158 27"><defs><linearGradient id="tg" x1="0" y1="0" x2="0" y2="1"><stop offset="0" stop-color="#fdfdfd"/><stop offset="1" stop-color="#f0f0f0"/></linearGradient></defs><path d="M119,25.5 L134,2 Q135,1.5 136,1.5 L160,1.5 L160,27 L119,27Z" fill="url(#tg)" stroke="#a8a8a8" stroke-width="1"/><path d="M1.5,25.5 L18,3 Q19,1.5 21,1.5 L108,1.5 Q110,1.5 111,3 L126,25.5 L126,27 L1.5,27Z" fill="url(#tg)" stroke="#a0a0a0" stroke-width="1"/><rect x="2" y="25" width="123" height="3" fill="#f0f0f0"/></svg>
<svg class="b" style="left:1207px;top:224px;" width="18" height="20" viewBox="0 0 18 20"><path d="M5,1 L13,1 L17,5 L17,15 L5,15Z" fill="#f4efe4" stroke="#b8b0a0" stroke-width="0.8"/><path d="M1,5 L9,5 L13,9 L13,19 L1,19Z" fill="#fbf6ea" stroke="#b0a898" stroke-width="0.8"/></svg>
<div class="t" style="left:1230.5px;top:226.81px;font-size:14.4px;line-height:14.4px;color:#101028;font-weight:bold;">Définition</div>
<svg class="b" style="left:1311px;top:228px;" width="16" height="12" viewBox="0 0 16 12"><path d="M1.5,6 L5.5,10 L14,1.5" stroke="#1ba3b0" stroke-width="2.8" fill="none"/></svg>
<div class="t" style="left:1332.5px;top:226.81px;font-size:14.4px;line-height:14.4px;color:#101028;font-weight:bold;">Ac</div>
<div class="t" style="left:914px;width:400px;text-align:right;top:255.24px;font-size:14.6px;line-height:14.6px;color:#000;transform:scaleX(0.897);transform-origin:100% 0;">Référence</div>
<div class="t" style="left:914px;width:400px;text-align:right;top:278.84px;font-size:14.6px;line-height:14.6px;color:#000;transform:scaleX(0.897);transform-origin:100% 0;">Désignation</div>
<div class="t" style="left:914px;width:400px;text-align:right;top:303.04px;font-size:14.6px;line-height:14.6px;color:#000;transform:scaleX(0.897);transform-origin:100% 0;">Mot Directeur</div>
<div class="t" style="left:914px;width:400px;text-align:right;top:329.14px;font-size:14.6px;line-height:14.6px;color:#000;transform:scaleX(0.897);transform-origin:100% 0;">Déroulement</div>
<div class="t" style="left:914px;width:400px;text-align:right;top:357.44px;font-size:14.6px;line-height:14.6px;color:#000;transform:scaleX(0.897);transform-origin:100% 0;">Ergonomie</div>
<div class="t" style="left:914px;width:400px;text-align:right;top:383.74px;font-size:14.6px;line-height:14.6px;color:#000;transform:scaleX(0.897);transform-origin:100% 0;">Lar. Libellés</div>
<div class="t" style="left:914px;width:400px;text-align:right;top:407.84px;font-size:14.6px;line-height:14.6px;color:#000;transform:scaleX(0.897);transform-origin:100% 0;">Style Fiche</div>
<div class="t" style="left:914px;width:400px;text-align:right;top:431.14px;font-size:14.6px;line-height:14.6px;color:#000;transform:scaleX(0.897);transform-origin:100% 0;">Couleur Zone Cou.</div>
<div class="t" style="left:914px;width:400px;text-align:right;top:460.04px;font-size:14.6px;line-height:14.6px;color:#000;transform:scaleX(0.897);transform-origin:100% 0;">Commentaire</div>
<div class="t" style="left:1334.5px;top:256.08px;font-size:13.6px;line-height:13.6px;color:#000;">IK</div>
<div class="t" style="left:1334.5px;top:279.68px;font-size:13.6px;line-height:13.6px;color:#000;">S</div>
<div class="b" style="left:1330px;top:323px;width:13px;height:25px;background:#d6d6d6;border-left:1px solid #c8c8c8;border-top:1px solid #c8c8c8;"></div>
<div class="t" style="left:1334px;top:329.48px;font-size:13.6px;line-height:13.6px;color:#8a8a8a;">[S</div>
<div class="b" style="left:1330px;top:351px;width:13px;height:26px;background:#d6d6d6;border-left:1px solid #c8c8c8;border-top:1px solid #c8c8c8;"></div>
<div class="t" style="left:1334px;top:357.98px;font-size:13.6px;line-height:13.6px;color:#8a8a8a;">[F</div>
<div class="t" style="left:1334px;top:384.48px;font-size:13.6px;line-height:13.6px;color:#000;">2</div>
<svg class="b" style="left:1329px;top:406px;" width="14" height="17" viewBox="0 0 14 17"><circle cx="9" cy="8.3" r="7.3" fill="#e6e6e6" stroke="#bdbdbd" stroke-width="1"/><circle cx="9" cy="8.3" r="4" fill="#cfcfcf"/></svg>
<div class="b" style="left:1330px;top:429px;width:13px;height:23px;background:#d9d9d9;border-left:1px solid #c0c0c0;border-top:1px solid #c0c0c0;"></div>
<svg class="b" style="left:1331px;top:432px;" width="12" height="17" viewBox="0 0 12 17"><circle cx="9" cy="8" r="5.5" fill="none" stroke="#333" stroke-width="1.3"/><path d="M5,13 L9,16" stroke="#333" stroke-width="1.2"/></svg>
<div class="b" style="left:1330px;top:457px;width:13px;height:94px;background:#fff;border:1px solid #7a7a7a;border-right:none;box-sizing:border-box;"></div>
<div class="b" style="left:784px;top:247px;width:330px;height:454px;background:#f2f2f2;border:1px solid #cccccc;box-sizing:border-box;box-shadow:3px 3px 3px -1px rgba(0,0,0,0.55);"></div>
<div class="b" style="left:822px;top:248px;width:1px;height:452px;background:#e9e9e9;"></div>
<div class="b" style="left:788px;top:516px;width:247px;height:27px;background:#8cc864;"></div>
<div class="b" style="left:1035px;top:516px;width:76px;height:27px;background:#91c9f6;"></div>
<div class="b" style="left:823px;top:420px;width:288px;height:1px;background:#d7d7d7;"></div>
<div class="b" style="left:823px;top:456px;width:288px;height:1px;background:#d7d7d7;"></div>
<div class="b" style="left:823px;top:575px;width:288px;height:1px;background:#d7d7d7;"></div>
<div class="b" style="left:823px;top:639px;width:288px;height:1px;background:#d7d7d7;"></div>
<div class="t" style="left:828.3px;top:257.55px;font-size:14.7px;line-height:14.7px;color:#1a1a1a;">Création (F9)</div>
<div class="t" style="left:828.3px;top:284.55px;font-size:14.7px;line-height:14.7px;color:#1a1a1a;">Modification (F1)</div>
<div class="t" style="left:828.3px;top:311.95px;font-size:14.7px;line-height:14.7px;color:#1a1a1a;">Modification Globale (Maj+F1)</div>
<div class="t" style="left:828.3px;top:339.75px;font-size:14.7px;line-height:14.7px;color:#1a1a1a;">Duplication (F7)</div>
<div class="t" style="left:828.3px;top:366.65px;font-size:14.7px;line-height:14.7px;color:#1a1a1a;">Suppression (F6)</div>
<div class="t" style="left:828.3px;top:394.15px;font-size:14.7px;line-height:14.7px;color:#1a1a1a;">Détail (F8)</div>
<div class="t" style="left:828.3px;top:431.05px;font-size:14.7px;line-height:14.7px;color:#1a1a1a;">Accès Requête(s) (Ctrl+F10)</div>
<div class="t" style="left:828.3px;top:467.65px;font-size:14.7px;line-height:14.7px;color:#1a1a1a;">Consultation Questionnaire (F12)</div>
<div class="t" style="left:828.3px;top:494.75px;font-size:14.7px;line-height:14.7px;color:#1a1a1a;">Test Questionnaire (F11)</div>
<div class="t" style="left:828.3px;top:522.15px;font-size:14.7px;line-height:14.7px;color:#1a1a1a;">Accès Questionnaire (F10)</div>
<div class="t" style="left:828.3px;top:549.55px;font-size:14.7px;line-height:14.7px;color:#8d8d8d;">Cas d'Emploi Questionnaire</div>
<div class="t" style="left:828.3px;top:585.95px;font-size:14.7px;line-height:14.7px;color:#1a1a1a;">Exportation</div>
<div class="t" style="left:828.3px;top:613.35px;font-size:14.7px;line-height:14.7px;color:#1a1a1a;">Importation de Données</div>
<div class="t" style="left:828.3px;top:649.75px;font-size:14.7px;line-height:14.7px;color:#1a1a1a;">Définition Filtres et Tris</div>
<div class="t" style="left:828.3px;top:677.15px;font-size:14.7px;line-height:14.7px;color:#1a1a1a;">Condition par Défaut</div>
<svg class="b" style="left:1091px;top:588px;" width="9" height="11" viewBox="0 0 9 11"><path d="M2,1.5 L6.5,5.5 L2,9.5" stroke="#333" stroke-width="1.2" fill="none"/></svg>
<svg class="b" style="left:1032.7px;top:526.5px;" width="24" height="34" viewBox="0 0 24 34"><path d="M2.00,2.00 L2.00,25.00 L7.50,19.80 L11.60,29.60 L14.80,28.20 L10.80,18.60 L18.60,18.60Z" fill="#fff" stroke="#fff" stroke-width="4" stroke-linejoin="round"/><path d="M2.00,2.00 L2.00,25.00 L7.50,19.80 L11.60,29.60 L14.80,28.20 L10.80,18.60 L18.60,18.60Z" fill="#fff" stroke="#000" stroke-width="2" stroke-linejoin="round"/></svg>
</body></html>
